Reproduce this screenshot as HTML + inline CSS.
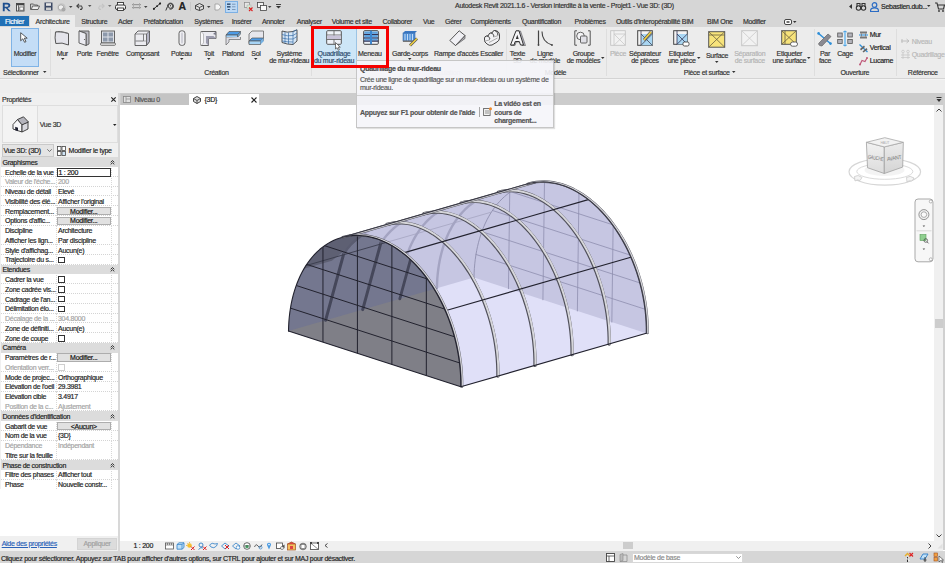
<!DOCTYPE html>
<html><head><meta charset="utf-8">
<style>*{box-sizing:border-box;margin:0;padding:0}
html,body{width:945px;height:563px;overflow:hidden;background:#fff;font-family:"Liberation Sans",sans-serif;font-size:7px;letter-spacing:-0.27px;color:#262626;position:relative}
.a{position:absolute}
.t{position:absolute;white-space:nowrap;line-height:9px;-webkit-text-stroke:0.18px currentColor}
svg{overflow:visible}
</style></head><body>
<div class="a" style="left:0px;top:0px;width:945px;height:15px;background:#d6d6d6;"></div><div class="a" style="left:0px;top:15px;width:945px;height:12px;background:#d6d6d6;"></div><div class="a" style="left:0px;top:27px;width:945px;height:52px;background:#ececec;border-bottom:1px solid #d4d4d4"></div><div class="a" style="left:0px;top:79px;width:945px;height:14px;background:#eeeeee;border-top:1px solid #f4f4f4"></div><div class="a" style="left:0px;top:93px;width:118px;height:458px;background:#f0f0f0;"></div><div class="a" style="left:118px;top:93px;width:2px;height:458px;background:#d8d8d8;"></div><div class="a" style="left:120px;top:93px;width:825px;height:12px;background:#cccccc;"></div><div class="a" style="left:120px;top:105px;width:814px;height:436px;background:#ffffff;"></div><div class="a" style="left:934px;top:105px;width:9px;height:436px;background:#f0f0f0;"></div><div class="a" style="left:943px;top:93px;width:2px;height:457px;background:#d0d0d0;"></div><div class="a" style="left:120px;top:541px;width:823px;height:10px;background:#f0f0f0;"></div><div class="a" style="left:0px;top:551px;width:945px;height:12px;background:#d6d6d6;"></div><svg class="a" style="left:2px;top:2px;" width="9.5" height="9.5" viewBox="0 0 9.5 9.5"><path d="M0.8 9.2V0.8H5Q8.3 0.8 8.3 3.4Q8.3 5.6 5.6 6L8.8 9.2H6.6L3.9 6.2H2.7V9.2Z M2.7 2.4V4.7H4.9Q6.4 4.7 6.4 3.5Q6.4 2.4 4.9 2.4Z" fill="#1e4f8f" fill-rule="evenodd"/></svg><svg class="a" style="left:15.5px;top:2.5px;" width="8.5" height="8.5" viewBox="0 0 8.5 8.5"><rect x="0.5" y="0.5" width="7.5" height="7.5" fill="#f0f0f0" stroke="#444" stroke-width="0.9"/><rect x="0.5" y="0.5" width="7.5" height="1.8" fill="#444"/><path d="M2.5 2.3V8" stroke="#444" stroke-width="0.8"/><rect x="3.8" y="4" width="3.5" height="3.2" fill="#fff" stroke="#555" stroke-width="0.7"/></svg><svg class="a" style="left:30px;top:3px;" width="10" height="7" viewBox="0 0 10 7"><path d="M0.5 1V6.5H8L9.5 3H2.5L1.5 6" fill="#eee" stroke="#555" stroke-width="0.9"/><path d="M0.5 1H3.5L4.5 2H7.5V3" fill="none" stroke="#555" stroke-width="0.9"/></svg><svg class="a" style="left:44px;top:2px;" width="9" height="9" viewBox="0 0 9 9"><rect x="0.5" y="0.5" width="8" height="8" fill="#3d4a66" /><rect x="2" y="1.2" width="5" height="2.6" fill="#e6e6e6"/><rect x="2" y="5.5" width="5" height="2.5" fill="#cfcfcf"/></svg><svg class="a" style="left:57px;top:2.5px;" width="9" height="9" viewBox="0 0 9 9"><circle cx="4.5" cy="4.5" r="4.2" fill="#c4c4c4"/><path d="M1.5 3L4 1.8L6.5 3V5.8L4 7.2L1.5 5.8Z" fill="#f0f0f0" stroke="#999" stroke-width="0.6"/><circle cx="6.5" cy="6.5" r="2" fill="#a8a8a8"/></svg><svg class="a" style="left:68.75px;top:5.5px;" width="3.5" height="2.5" viewBox="0 0 3.5 2.5"><path d="M0 0H3.5L1.75 2Z" fill="#444"/></svg><svg class="a" style="left:76px;top:3px;" width="9" height="7" viewBox="0 0 9 7"><path d="M3 0.8L0.8 3L3 5.2M0.8 3H5.5A2.6 2.6 0 0 1 5.5 6.4H4" fill="none" stroke="#444" stroke-width="1.1"/></svg><svg class="a" style="left:88.25px;top:5px;" width="3.5" height="2.5" viewBox="0 0 3.5 2.5"><path d="M0 0H3.5L1.75 2Z" fill="#555"/></svg><svg class="a" style="left:96px;top:3px;" width="9" height="7" viewBox="0 0 9 7"><path d="M6 0.8L8.2 3L6 5.2M8.2 3H3.5A2.6 2.6 0 0 0 3.5 6.4H5" fill="none" stroke="#c4c4c4" stroke-width="1.1"/></svg><svg class="a" style="left:107.95px;top:5px;" width="3.5" height="2.5" viewBox="0 0 3.5 2.5"><path d="M0 0H3.5L1.75 2Z" fill="#777"/></svg><svg class="a" style="left:114.5px;top:2px;" width="11" height="9" viewBox="0 0 11 9"><rect x="2.5" y="0.5" width="6" height="3" fill="#fff" stroke="#333" stroke-width="0.9"/><rect x="0.5" y="3" width="10" height="4.5" rx="1.5" fill="#f4f4f4" stroke="#333" stroke-width="1"/><rect x="2.5" y="6" width="6" height="2.5" fill="#fff" stroke="#333" stroke-width="0.9"/></svg><svg class="a" style="left:131.5px;top:3px;" width="9" height="6" viewBox="0 0 9 6"><rect x="0" y="1" width="9" height="1.2" fill="#999"/><rect x="0" y="4" width="9" height="1.2" fill="#999"/><rect x="1" y="0" width="0.9" height="6" fill="#aaa"/><rect x="7" y="0" width="0.9" height="6" fill="#aaa"/></svg><svg class="a" style="left:144.25px;top:5.5px;" width="3.5" height="2.5" viewBox="0 0 3.5 2.5"><path d="M0 0H3.5L1.75 2Z" fill="#444"/></svg><svg class="a" style="left:152px;top:2px;" width="10" height="8.5" viewBox="0 0 10 8.5"><path d="M1 7.5L9 0.8" stroke="#333" stroke-width="1"/><circle cx="2" cy="6.8" r="1.1" fill="#222"/><circle cx="8" cy="1.6" r="1.1" fill="#222"/><circle cx="5" cy="4.2" r="0.9" fill="#222"/></svg><svg class="a" style="left:165px;top:2.5px;" width="9" height="8" viewBox="0 0 9 8"><path d="M0.8 7.5L2.5 3.5A3 3 0 1 1 4.5 6" fill="none" stroke="#333" stroke-width="1"/><circle cx="5.5" cy="3" r="2.3" fill="none" stroke="#333" stroke-width="0.9"/><path d="M5.5 2V3.4" stroke="#333" stroke-width="0.8"/></svg><div class="t" style="left:178.5px;top:0px;font-size:10.5px;line-height:13px;font-weight:bold;color:#222;letter-spacing:0">A</div><div class="a" style="left:190px;top:2px;width:1px;height:9px;background:#c8c8c8;"></div><svg class="a" style="left:195px;top:2.5px;" width="9" height="8" viewBox="0 0 9 8"><path d="M4.5 0.5L8.5 2.5V6L4.5 7.5L0.5 6V2.5Z" fill="#ddd" stroke="#333" stroke-width="0.9"/><path d="M0.5 2.5L4.5 4.5L8.5 2.5M4.5 4.5V7.5" fill="none" stroke="#333" stroke-width="0.8"/></svg><svg class="a" style="left:206.75px;top:5.5px;" width="3.5" height="2.5" viewBox="0 0 3.5 2.5"><path d="M0 0H3.5L1.75 2Z" fill="#444"/></svg><svg class="a" style="left:214px;top:2.5px;" width="7.5" height="8" viewBox="0 0 7.5 8"><path d="M1 1H4.5L7 4L4.5 7H1Z" fill="#f6f6f6" stroke="#999" stroke-width="0.8"/></svg><div class="a" style="left:225px;top:0.5px;width:12.5px;height:12px;background:#bcd8f4;border:1px solid #7cb0e4"></div><svg class="a" style="left:227px;top:2.5px;" width="9" height="8" viewBox="0 0 9 8"><rect x="0" y="0.5" width="3.5" height="1.3" fill="#1c3a5e"/><rect x="0" y="3.2" width="3.5" height="1.3" fill="#1c3a5e"/><rect x="0.7" y="6" width="2" height="1" fill="#1c3a5e"/><rect x="5" y="0.8" width="3.5" height="0.7" fill="#5d7da0"/><rect x="5" y="3.5" width="3.5" height="0.7" fill="#5d7da0"/><rect x="5" y="6.2" width="3.5" height="0.7" fill="#5d7da0"/></svg><svg class="a" style="left:244px;top:2px;" width="9" height="9" viewBox="0 0 9 9"><rect x="0.5" y="0.5" width="5" height="5" fill="#e6e6e6" stroke="#888" stroke-width="0.7"/><rect x="3" y="3" width="4" height="4" fill="#d4ead4" stroke="#aaa" stroke-width="0.5"/><path d="M5 5.5L8.5 9M8.5 5.5L5 9" stroke="#d22" stroke-width="1.1"/></svg><svg class="a" style="left:256.5px;top:2px;" width="10" height="9" viewBox="0 0 10 9"><rect x="0.5" y="0.5" width="6" height="5" fill="#f2f2f2" stroke="#444" stroke-width="0.8"/><rect x="3.5" y="3.5" width="6" height="5" fill="#fafafa" stroke="#444" stroke-width="0.8"/></svg><svg class="a" style="left:268.25px;top:5.5px;" width="3.5" height="2.5" viewBox="0 0 3.5 2.5"><path d="M0 0H3.5L1.75 2Z" fill="#444"/></svg><svg class="a" style="left:275.5px;top:4px;" width="5" height="5" viewBox="0 0 5 5"><rect x="0" y="0" width="5" height="0.9" fill="#333"/><path d="M0 2H5L2.5 4.5Z" fill="#333"/></svg><div class="t" style="left:455px;top:1.0px;color:#333;">Autodesk Revit 2021.1.6 - Version interdite à la vente - Projet1 - Vue 3D: (3D)</div><svg class="a" style="left:849px;top:4px;" width="3" height="5" viewBox="0 0 3 5"><path d="M3 0V5L0 2.5Z" fill="#333"/></svg><svg class="a" style="left:855.5px;top:2px;" width="10" height="9" viewBox="0 0 10 9"><circle cx="2.5" cy="6" r="2.2" fill="none" stroke="#333" stroke-width="1.1"/><circle cx="7.5" cy="6" r="2.2" fill="none" stroke="#333" stroke-width="1.1"/><path d="M1 5V1.5H4V5M6 5V1.5H9V5" fill="none" stroke="#333" stroke-width="1.1"/></svg><svg class="a" style="left:870px;top:2px;" width="9" height="10" viewBox="0 0 9 10"><circle cx="4.5" cy="3" r="2.3" fill="none" stroke="#2b6cc4" stroke-width="1.2"/><path d="M0.6 9.5V8.5Q0.6 5.8 4.5 5.8Q8.4 5.8 8.4 8.5V9.5Z" fill="none" stroke="#2b6cc4" stroke-width="1.2"/></svg><div class="t" style="left:881px;top:1.5px;color:#222;">Sebastien.dub...</div><svg class="a" style="left:926.75px;top:5px;" width="3.5" height="2.5" viewBox="0 0 3.5 2.5"><path d="M0 0H3.5L1.75 2Z" fill="#333"/></svg><svg class="a" style="left:934.5px;top:2px;" width="10" height="10" viewBox="0 0 10 10"><path d="M0 1H2L3.5 7H8.5L9.5 3H2.7" fill="none" stroke="#333" stroke-width="1.1"/><circle cx="4" cy="9" r="0.9" fill="#333"/><circle cx="8" cy="9" r="0.9" fill="#333"/></svg><div class="a" style="left:0px;top:16px;width:29px;height:10px;background:#2070b6;"></div><div class="t" style="left:-65.5px;width:160px;text-align:center;top:16.5px;color:#fff;">Fichier</div><div class="a" style="left:30px;top:15px;width:45px;height:12px;background:#ececec;"></div><div class="t" style="left:35.5px;top:16.8px;color:#333;">Architecture</div><div class="t" style="left:81.3px;top:16.8px;color:#333;">Structure</div><div class="t" style="left:118px;top:16.8px;color:#333;">Acier</div><div class="t" style="left:143.5px;top:16.8px;color:#333;">Préfabrication</div><div class="t" style="left:194.3px;top:16.8px;color:#333;">Systèmes</div><div class="t" style="left:231.7px;top:16.8px;color:#333;">Insérer</div><div class="t" style="left:261.9px;top:16.8px;color:#333;">Annoter</div><div class="t" style="left:296.8px;top:16.8px;color:#333;">Analyser</div><div class="t" style="left:331.7px;top:16.8px;color:#333;">Volume et site</div><div class="t" style="left:382.5px;top:16.8px;color:#333;">Collaborer</div><div class="t" style="left:423px;top:16.8px;color:#333;">Vue</div><div class="t" style="left:445px;top:16.8px;color:#333;">Gérer</div><div class="t" style="left:470.5px;top:16.8px;color:#333;">Compléments</div><div class="t" style="left:522px;top:16.8px;color:#333;">Quantification</div><div class="t" style="left:574.6px;top:16.8px;color:#333;">Problèmes</div><div class="t" style="left:615.9px;top:16.8px;color:#333;">Outils d'interopérabilité BIM</div><div class="t" style="left:707px;top:16.8px;color:#333;">BIM One</div><div class="t" style="left:742.9px;top:16.8px;color:#333;">Modifier</div><svg class="a" style="left:784px;top:18.5px;" width="8" height="6" viewBox="0 0 8 6"><rect x="0.5" y="0.5" width="7" height="5" rx="1.5" fill="#fff" stroke="#333" stroke-width="0.9"/><rect x="2.5" y="2.3" width="3" height="1.4" fill="#333"/></svg><svg class="a" style="left:793.25px;top:20.8px;" width="3.5" height="2.5" viewBox="0 0 3.5 2.5"><path d="M0 0H3.5L1.75 2Z" fill="#333"/></svg><div class="a" style="left:49.5px;top:29px;width:1px;height:47px;background:#dedede;"></div><div class="a" style="left:311px;top:29px;width:1px;height:47px;background:#dedede;"></div><div class="a" style="left:505.8px;top:29px;width:1px;height:47px;background:#dedede;"></div><div class="a" style="left:605.5px;top:29px;width:1px;height:47px;background:#dedede;"></div><div class="a" style="left:813.5px;top:29px;width:1px;height:47px;background:#dedede;"></div><div class="a" style="left:895.5px;top:29px;width:1px;height:47px;background:#dedede;"></div><div class="a" style="left:11px;top:28px;width:28px;height:39px;background:#c4ddf6;border:1px solid #7fb3e6"></div><svg class="a" style="left:20px;top:32px;" width="8" height="11" viewBox="0 0 8 11"><path d="M0.7 0.7V8.8L2.8 6.8L4.6 10.3L6 9.6L4.3 6.2H7.2Z" fill="#fff" stroke="#333" stroke-width="0.8"/></svg><div class="t" style="left:-55px;width:160px;text-align:center;top:48.7px;color:#333;">Modifier</div><div class="t" style="left:3px;top:67.5px;color:#333;">Sélectionner</div><svg class="a" style="left:43.25px;top:71px;" width="3.5" height="2.5" viewBox="0 0 3.5 2.5"><path d="M0 0H3.5L1.75 2Z" fill="#333"/></svg><svg class="a" style="left:54px;top:30px;" width="16" height="16" viewBox="0 0 16 16"><path d="M1.5 2Q5 0.5 14.5 3.5V15Q8 12 1.8 13.5Q0.5 8 1.5 2Z" fill="#e4e4ea" stroke="#555" stroke-width="1"/><path d="M14.5 3.5Q8 1.5 1.5 2" fill="none" stroke="#777" stroke-width="0.8"/></svg><div class="t" style="left:-17.700000000000003px;width:160px;text-align:center;top:48.7px;color:#333;">Mur</div><svg class="a" style="left:60.55px;top:58px;" width="3.5" height="2.5" viewBox="0 0 3.5 2.5"><path d="M0 0H3.5L1.75 2Z" fill="#333"/></svg><svg class="a" style="left:78px;top:30px;" width="16" height="16" viewBox="0 0 16 16"><path d="M1 1H11V14L8 15.5V3.5L1 1Z" fill="#bcbcc4" stroke="#555" stroke-width="0.9"/><path d="M1 1L8 3.5V15.5L1 13Z" fill="#ececf2" stroke="#555" stroke-width="0.9"/><circle cx="6.5" cy="9.5" r="0.6" fill="#555"/></svg><div class="t" style="left:4.5px;width:160px;text-align:center;top:48.7px;color:#333;">Porte</div><svg class="a" style="left:100px;top:30px;" width="16" height="16" viewBox="0 0 16 16"><rect x="1.5" y="1" width="13" height="12" fill="#dfe2e8" stroke="#555" stroke-width="0.9"/><rect x="3" y="2.5" width="4.5" height="4" fill="#8d99ab"/><rect x="8.5" y="2.5" width="4.5" height="4" fill="#8d99ab"/><rect x="3" y="7.5" width="4.5" height="4" fill="#8d99ab"/><rect x="8.5" y="7.5" width="4.5" height="4" fill="#8d99ab"/><rect x="0.5" y="13" width="15" height="2.3" rx="1" fill="#e8e8e8" stroke="#555" stroke-width="0.8"/></svg><div class="t" style="left:27.5px;width:160px;text-align:center;top:48.7px;color:#333;">Fenêtre</div><svg class="a" style="left:134px;top:30px;" width="16" height="16" viewBox="0 0 16 16"><path d="M1 4L4 1H15.5V11.5L12.5 15.5H1Z" fill="#ececf0" stroke="#555" stroke-width="0.9"/><path d="M12.5 4L15.5 1V11.5L12.5 15.5Z" fill="#b6b6c6" stroke="#555" stroke-width="0.7"/><path d="M1 4H12.5V15.5" fill="none" stroke="#666" stroke-width="0.7"/><path d="M9.5 4V11H1.5" fill="none" stroke="#666" stroke-width="0.8"/><path d="M9.5 11L12.5 11" stroke="#888" stroke-width="0.6"/></svg><div class="t" style="left:62.599999999999994px;width:160px;text-align:center;top:48.7px;color:#333;">Composant</div><svg class="a" style="left:140.85px;top:58px;" width="3.5" height="2.5" viewBox="0 0 3.5 2.5"><path d="M0 0H3.5L1.75 2Z" fill="#333"/></svg><svg class="a" style="left:177.5px;top:30px;" width="8" height="16" viewBox="0 0 8 16"><rect x="1" y="0.8" width="6" height="14.6" rx="2.5" fill="#efeff2" stroke="#555" stroke-width="0.9"/><rect x="3" y="2.5" width="2" height="11" rx="1" fill="#d0d0d8"/></svg><div class="t" style="left:101.4px;width:160px;text-align:center;top:48.7px;color:#333;">Poteau</div><svg class="a" style="left:179.65px;top:58px;" width="3.5" height="2.5" viewBox="0 0 3.5 2.5"><path d="M0 0H3.5L1.75 2Z" fill="#333"/></svg><svg class="a" style="left:200.3px;top:30px;" width="16" height="16" viewBox="0 0 16 16"><path d="M1 1.5H16V8.5H8.5V15.5H1Z" fill="#eaeaf0" stroke="#555" stroke-width="0.9"/><path d="M8.5 8.5H16L13.5 6H6V13L8.5 15.5Z" fill="#9c9cae"/><path d="M16 1.5V5L13 4Z" fill="#7a7a88"/><path d="M1 15.5L3.5 13V4L1 1.5" fill="#f8f8fa" stroke="#888" stroke-width="0.5"/></svg><div class="t" style="left:129px;width:160px;text-align:center;top:48.7px;color:#333;">Toit</div><svg class="a" style="left:207.25px;top:58px;" width="3.5" height="2.5" viewBox="0 0 3.5 2.5"><path d="M0 0H3.5L1.75 2Z" fill="#333"/></svg><svg class="a" style="left:224.5px;top:30px;" width="16" height="16" viewBox="0 0 16 16"><path d="M1 5L4 1.5H15.5L12.5 5Z" fill="#4d9be6" stroke="#555" stroke-width="0.7"/><path d="M1 5H12.5V7.5H1Z" fill="#9ccdf5" stroke="#555" stroke-width="0.7"/><path d="M12.5 5L15.5 1.5V4L12.5 7.5Z" fill="#6aa9e0" stroke="#555" stroke-width="0.6"/><path d="M1 7.5V15L4 12V9.5H15.5V7" fill="#dcdce4" stroke="#666" stroke-width="0.7"/></svg><div class="t" style="left:153px;width:160px;text-align:center;top:48.7px;color:#333;">Plafond</div><svg class="a" style="left:248px;top:30px;" width="16" height="16" viewBox="0 0 16 16"><path d="M1 4L4 1H15.5V10.5L12.5 13.5H1Z" fill="#e6e6ec" stroke="#666" stroke-width="0.8"/><path d="M1 11L4 8H15.5L12.5 11Z" fill="#4d9be6" stroke="#555" stroke-width="0.7"/><path d="M1 11H12.5V14.5H1Z" fill="#a6d4f6" stroke="#555" stroke-width="0.7"/><path d="M12.5 11L15.5 8V11.5L12.5 14.5Z" fill="#74b1e4"/></svg><div class="t" style="left:176px;width:160px;text-align:center;top:48.7px;color:#333;">Sol</div><svg class="a" style="left:254.25px;top:58px;" width="3.5" height="2.5" viewBox="0 0 3.5 2.5"><path d="M0 0H3.5L1.75 2Z" fill="#333"/></svg><svg class="a" style="left:280.5px;top:29px;" width="17" height="17" viewBox="0 0 17 17"><path d="M1 2Q6 4 12 2.5L16 0.8V12L12 15.5Q6 15.5 1 13.5Z" fill="#d6e6f6" stroke="#444" stroke-width="0.9"/><path d="M12 2.5V15.5M1 5.5Q6 7.5 12 6.5M1 9Q6 10.5 12 10M1 12Q6 13 12 13M4 3V14.5M7.5 3.5V15M12 2.5L16 0.8M12 6.5L16 4M12 10L16 7.5" fill="none" stroke="#3a6ea8" stroke-width="0.7"/></svg><div class="t" style="left:209.2px;width:160px;text-align:center;top:48.7px;color:#333;">Système</div><div class="t" style="left:209.2px;width:160px;text-align:center;top:55.7px;color:#333;">de mur-rideau</div><div class="a" style="left:314px;top:29px;width:43px;height:36px;background:#cde6f7;border-right:1px solid #9cc4e4"></div><svg class="a" style="left:326px;top:30px;" width="16" height="16" viewBox="0 0 16 16"><rect x="0.7" y="0.7" width="14.6" height="13.6" rx="1" fill="#eef2f8" stroke="#555" stroke-width="1"/><path d="M8 0.7V14.3M0.7 5H15.3M0.7 9.5H15.3" stroke="#666" stroke-width="0.9"/><rect x="1.3" y="5.5" width="13.4" height="3.5" fill="#c9c3d9"/></svg><div class="t" style="left:254px;width:160px;text-align:center;top:48.7px;color:#2d4d6e;">Quadrillage</div><div class="t" style="left:254px;width:160px;text-align:center;top:55.7px;color:#2d4d6e;">du mur-rideau</div><svg class="a" style="left:334.5px;top:42px;" width="6" height="9" viewBox="0 0 6 9"><path d="M0.5 0.5V7L2 5.7L3.3 8.3L4.4 7.8L3.2 5.2H5.3Z" fill="#fff" stroke="#444" stroke-width="0.7"/></svg><svg class="a" style="left:362.5px;top:30px;" width="16" height="16" viewBox="0 0 16 16"><rect x="0.7" y="0.7" width="14.6" height="13.6" rx="1" fill="#eef2f8" stroke="#444" stroke-width="1"/><path d="M0.7 4.5H15.3M0.7 8H15.3M0.7 11H15.3" stroke="#335" stroke-width="1.3"/><rect x="1.3" y="1.5" width="13.4" height="2.3" fill="#5da3e0"/><rect x="1.3" y="5" width="13.4" height="2.3" fill="#5da3e0"/><rect x="1.3" y="8.6" width="13.4" height="1.8" fill="#5da3e0"/><rect x="7" y="0.7" width="2" height="13.6" fill="#3c86cf"/></svg><div class="t" style="left:289.8px;width:160px;text-align:center;top:48.7px;color:#333;">Meneau</div><svg class="a" style="left:402px;top:30px;" width="16" height="16" viewBox="0 0 16 16"><path d="M1 3L3 1H15L13 3Z" fill="#3a78c4"/><rect x="1" y="3" width="12" height="8" fill="#4f8fd6" stroke="#3a6aa8" stroke-width="0.6"/><path d="M3 4V10.5M5.5 4V10.5M8 4V10.5M10.5 4V10.5" stroke="#dfefff" stroke-width="0.8"/><rect x="1" y="10.5" width="12" height="1.5" fill="#777"/><path d="M8 15.5L15 8.5" stroke="#555" stroke-width="2.8"/><path d="M8 15.5L15 8.5" stroke="#f0d040" stroke-width="1.6"/></svg><div class="t" style="left:330px;width:160px;text-align:center;top:48.7px;color:#333;">Garde-corps</div><svg class="a" style="left:408.25px;top:58px;" width="3.5" height="2.5" viewBox="0 0 3.5 2.5"><path d="M0 0H3.5L1.75 2Z" fill="#333"/></svg><svg class="a" style="left:449px;top:30px;" width="16" height="16" viewBox="0 0 16 16"><path d="M0.8 10.5L10.2 0.8L16 5.5L6.5 15.5Z" fill="#f0f0f4" stroke="#444" stroke-width="0.9"/><path d="M16 5.5V8.5L6.5 15.5L15 7Z" fill="#b0b0b8" stroke="#555" stroke-width="0.7"/></svg><div class="t" style="left:376.3px;width:160px;text-align:center;top:48.7px;color:#333;">Rampe d'accès</div><svg class="a" style="left:483.5px;top:30px;" width="16" height="16" viewBox="0 0 16 16"><path d="M0.5 8Q0.5 6.5 2.5 6L4.5 5.5Q4.5 3.5 6.5 3L8.5 2.5Q8.5 0.8 10.5 0.5Q15 0.5 15.5 5V8Q15.5 10.5 13 12L8 15Q5 16 3 14L1 12Q0.3 11 0.5 8Z" fill="#f2f2f4" stroke="#333" stroke-width="0.9"/><path d="M2.5 6Q5.5 6 6 9L5 9.5M6.5 3Q9.5 3 10 6L9 6.5M10.5 0.5Q13.5 1 14 4.5L13 5" fill="none" stroke="#333" stroke-width="0.8"/><path d="M1 11L5.5 10M5 12.5L13.5 8M9.5 7L14.5 5.5" fill="none" stroke="#999" stroke-width="0.8"/></svg><div class="t" style="left:411.7px;width:160px;text-align:center;top:48.7px;color:#333;">Escalier</div><svg class="a" style="left:509.6px;top:30px;" width="16" height="16" viewBox="0 0 16 16"><path d="M1 15.5L6.5 1H10.5L15.5 15.5H12L10.8 12H6.2L5 15.5Z" fill="#b4b4c0" stroke="#555" stroke-width="0.6"/><path d="M0.5 15L6 0.8H9L13.5 15H10.5L9.3 11.5H5.2L4 15Z" fill="#f4f4f6" stroke="#333" stroke-width="1"/><path d="M5.8 9H8.7L7.3 4.8Z" fill="#333"/></svg><div class="t" style="left:437.4px;width:160px;text-align:center;top:48.7px;color:#333;">Texte</div><div class="t" style="left:437.4px;width:160px;text-align:center;top:55.7px;color:#333;">3D</div><svg class="a" style="left:537px;top:30px;" width="16" height="16" viewBox="0 0 16 16"><path d="M1.5 0.5V15" stroke="#444" stroke-width="1.2"/><path d="M5 1.5Q5 12 15 15" fill="none" stroke="#444" stroke-width="1.1"/><circle cx="1.5" cy="15" r="0.9" fill="#444"/><circle cx="15" cy="15" r="0.9" fill="#444"/></svg><div class="t" style="left:465px;width:160px;text-align:center;top:48.7px;color:#333;">Ligne</div><div class="t" style="left:465px;width:160px;text-align:center;top:55.7px;color:#333;">de modèle</div><svg class="a" style="left:574px;top:30px;" width="17" height="16" viewBox="0 0 17 16"><path d="M3 0.8H0.8V15.2H3M14 0.8H16.2V15.2H14" fill="none" stroke="#555" stroke-width="1"/><circle cx="6.5" cy="6" r="3.8" fill="#f4f4f6" stroke="#555" stroke-width="0.9"/><rect x="6.5" y="6" width="6.5" height="7" rx="1" fill="#e0e0e6" stroke="#555" stroke-width="0.9"/></svg><div class="t" style="left:503.5px;width:160px;text-align:center;top:48.7px;color:#333;">Groupe</div><div class="t" style="left:503.5px;width:160px;text-align:center;top:55.7px;color:#333;">de modèles</div><svg class="a" style="left:601.25px;top:56.6px;" width="3.5" height="2.5" viewBox="0 0 3.5 2.5"><path d="M0 0H3.5L1.75 2Z" fill="#333"/></svg><svg class="a" style="left:609.5px;top:30px;" width="16" height="16" viewBox="0 0 16 16"><rect x="0.7" y="0.7" width="14.6" height="14.6" fill="#f2f2f2" stroke="#c4c4c4" stroke-width="0.9"/><path d="M4 0.7V15.3M4 4H15.3M4 4L15.3 15.3M15.3 4L4 15.3" stroke="#c8c8c8" stroke-width="0.8"/></svg><div class="t" style="left:538px;width:160px;text-align:center;top:48.7px;color:#b4b4b4;">Pièce</div><svg class="a" style="left:637px;top:30px;" width="16" height="16" viewBox="0 0 16 16"><rect x="0.7" y="0.7" width="14.6" height="14.6" fill="#f4f4f4" stroke="#444" stroke-width="1"/><rect x="4" y="4" width="11.3" height="11.3" fill="#a9d6f2"/><path d="M4 0.7V15.3M4 4L15.3 15.3M15.3 4L4 15.3" stroke="#445" stroke-width="0.8"/><path d="M7 10L14 2" stroke="#555" stroke-width="2.8"/><path d="M7 10L14 2" stroke="#f0d040" stroke-width="1.6"/></svg><div class="t" style="left:565px;width:160px;text-align:center;top:48.7px;color:#333;">Séparateur</div><div class="t" style="left:565px;width:160px;text-align:center;top:55.7px;color:#333;">de pièces</div><svg class="a" style="left:673px;top:30px;" width="16" height="16" viewBox="0 0 16 16"><rect x="0.7" y="0.7" width="13.6" height="13.6" fill="#f4f4f4" stroke="#444" stroke-width="1"/><rect x="4" y="4" width="10.3" height="10.3" fill="#a9d6f2"/><path d="M4 0.7V14.3M4 4L14.3 14.3M14.3 4L4 14.3" stroke="#335" stroke-width="0.8"/><rect x="10" y="12" width="6" height="4" rx="1.5" fill="#fff" stroke="#444" stroke-width="0.9"/></svg><div class="t" style="left:601.6px;width:160px;text-align:center;top:48.7px;color:#333;">Etiqueter</div><div class="t" style="left:601.6px;width:160px;text-align:center;top:55.7px;color:#333;">une pièce</div><svg class="a" style="left:696.65px;top:56.6px;" width="3.5" height="2.5" viewBox="0 0 3.5 2.5"><path d="M0 0H3.5L1.75 2Z" fill="#333"/></svg><svg class="a" style="left:708.3px;top:31px;" width="18" height="17" viewBox="0 0 18 17"><rect x="0.7" y="0.7" width="16" height="15.5" fill="#f7e37a" stroke="#555" stroke-width="1"/><path d="M0.7 0.7L16.7 16.2M16.7 0.7L0.7 16.2M0.7 4H16.7" stroke="#6a6040" stroke-width="0.8"/></svg><div class="t" style="left:637px;width:160px;text-align:center;top:51.2px;color:#333;">Surface</div><svg class="a" style="left:715.25px;top:60.5px;" width="3.5" height="2.5" viewBox="0 0 3.5 2.5"><path d="M0 0H3.5L1.75 2Z" fill="#333"/></svg><svg class="a" style="left:741px;top:30px;" width="16" height="16" viewBox="0 0 16 16"><rect x="0.7" y="0.7" width="15.6" height="15" fill="#f2f2f2" stroke="#c4c4c4" stroke-width="0.9"/><path d="M0.7 0.7L16.3 15.7M16.3 0.7L0.7 15.7" stroke="#cacaca" stroke-width="0.8"/></svg><div class="t" style="left:669.8px;width:160px;text-align:center;top:48.7px;color:#b4b4b4;">Séparation</div><div class="t" style="left:669.8px;width:160px;text-align:center;top:55.7px;color:#b4b4b4;">de surface</div><svg class="a" style="left:781px;top:30px;" width="16" height="16" viewBox="0 0 16 16"><rect x="0.7" y="0.7" width="14.6" height="13.6" fill="#f7e37a" stroke="#555" stroke-width="1"/><path d="M0.7 0.7L15.3 14.3M15.3 0.7L0.7 14.3M4 0.7V14.3" stroke="#6a6040" stroke-width="0.8"/><rect x="9.5" y="12" width="7" height="4.2" rx="2" fill="#fff" stroke="#555" stroke-width="0.9"/></svg><div class="t" style="left:709.4px;width:160px;text-align:center;top:48.7px;color:#333;">Etiqueter</div><div class="t" style="left:709.4px;width:160px;text-align:center;top:55.7px;color:#333;">une surface</div><svg class="a" style="left:806.65px;top:56.6px;" width="3.5" height="2.5" viewBox="0 0 3.5 2.5"><path d="M0 0H3.5L1.75 2Z" fill="#333"/></svg><svg class="a" style="left:817px;top:31px;" width="15" height="15" viewBox="0 0 15 15"><path d="M1 2L14 13" stroke="#2f8fd8" stroke-width="1.6"/><circle cx="1.6" cy="2.4" r="1.3" fill="#2f8fd8"/><circle cx="13.5" cy="12.6" r="1.3" fill="#2f8fd8"/><path d="M2 12L11 3L14 5.5L5 15Q2 15 1.5 13Z" fill="#8a8a92" stroke="#666" stroke-width="0.7"/></svg><div class="t" style="left:745px;width:160px;text-align:center;top:48.7px;color:#333;">Par</div><div class="t" style="left:745px;width:160px;text-align:center;top:55.7px;color:#333;">face</div><svg class="a" style="left:837px;top:31px;" width="16" height="15" viewBox="0 0 16 15"><rect x="0.7" y="2" width="4.5" height="4" fill="#b4b4bc" stroke="#555" stroke-width="0.8"/><rect x="0.7" y="8.5" width="4.5" height="4" fill="#b4b4bc" stroke="#555" stroke-width="0.8"/><rect x="10.8" y="2" width="4.5" height="4" fill="#b4b4bc" stroke="#555" stroke-width="0.8"/><rect x="10.8" y="8.5" width="4.5" height="4" fill="#b4b4bc" stroke="#555" stroke-width="0.8"/><path d="M8 0V15" stroke="#8cc6f0" stroke-width="2"/><path d="M6.2 1L8 0L9.8 1M6.2 14L8 15L9.8 14" fill="none" stroke="#2f8fd8" stroke-width="0.8"/></svg><div class="t" style="left:765px;width:160px;text-align:center;top:48.7px;color:#333;">Cage</div><svg class="a" style="left:858.5px;top:31px;" width="9" height="8" viewBox="0 0 9 8"><rect x="1" y="0.5" width="7" height="2" fill="#777"/><rect x="1" y="5.5" width="7" height="2" fill="#777"/><path d="M0 4H9" stroke="#4aa3e8" stroke-width="1.3"/><path d="M2.5 2.5V5.5M6.5 2.5V5.5" stroke="#777" stroke-width="0.8"/></svg><div class="t" style="left:869.7px;top:30.299999999999997px;color:#222;">Mur</div><svg class="a" style="left:858.5px;top:43.5px;" width="9" height="8.5" viewBox="0 0 9 8.5"><path d="M0.5 0.5L8.5 8" stroke="#2f8fd8" stroke-width="1.3"/><path d="M1 5L5 1.5L6 3L2 6.5Z" fill="#666"/><path d="M3.5 7.5L7.5 4L8.5 5.5L4.5 8.5Z" fill="#666"/></svg><div class="t" style="left:869.7px;top:43.0px;color:#222;">Vertical</div><svg class="a" style="left:858.5px;top:56.5px;" width="9" height="8.5" viewBox="0 0 9 8.5"><path d="M1 7.5L3 3.5L6 4.5L8 1" fill="none" stroke="#c05a7a" stroke-width="1.2"/><circle cx="1" cy="7.5" r="1" fill="#c05a7a"/><circle cx="8" cy="1" r="1" fill="#c05a7a"/></svg><div class="t" style="left:869.7px;top:56.2px;color:#222;">Lucarne</div><svg class="a" style="left:900.5px;top:38px;" width="9" height="6" viewBox="0 0 9 6"><path d="M0 3H8M5.5 1L8 3L5.5 5M1 1V5" fill="none" stroke="#bbb" stroke-width="0.9"/></svg><div class="t" style="left:911.7px;top:36.7px;color:#b8b8b8;">Niveau</div><svg class="a" style="left:900.5px;top:50px;" width="9" height="9" viewBox="0 0 9 9"><circle cx="2" cy="1.5" r="1.3" fill="none" stroke="#c4c4c4" stroke-width="0.7"/><circle cx="7" cy="1.5" r="1.3" fill="none" stroke="#c4c4c4" stroke-width="0.7"/><path d="M2 3V9M7 3V9M0 5H9M0 7.5H9" stroke="#c4c4c4" stroke-width="0.7"/></svg><div class="t" style="left:911.7px;top:49.7px;color:#b8b8b8;">Quadrillage</div><div class="t" style="left:136.5px;width:160px;text-align:center;top:67.5px;color:#333;">Création</div><div class="t" style="left:365px;width:160px;text-align:center;top:68.0px;color:#bdbdc6;">Circulation</div><div class="t" style="left:475.5px;width:160px;text-align:center;top:67.5px;color:#333;">Modèle</div><div class="t" style="left:683.8px;top:67.5px;color:#333;">Pièce et surface</div><svg class="a" style="left:731.95px;top:71.3px;" width="3.5" height="2.5" viewBox="0 0 3.5 2.5"><path d="M0 0H3.5L1.75 2Z" fill="#333"/></svg><div class="t" style="left:774.8px;width:160px;text-align:center;top:67.5px;color:#333;">Ouverture</div><div class="t" style="left:842.8px;width:160px;text-align:center;top:67.5px;color:#333;">Référence</div><div class="t" style="left:2px;top:95.1px;color:#333;">Propriétés</div><svg class="a" style="left:111px;top:97px;" width="5" height="5" viewBox="0 0 5 5"><path d="M0.3 0.3L4.7 4.7M4.7 0.3L0.3 4.7" stroke="#222" stroke-width="1.1"/></svg><div class="a" style="left:1.5px;top:105.3px;width:116px;height:38px;background:#f0f0f0;border:1px solid #dedede"></div><div class="a" style="left:2.5px;top:106.3px;width:35px;height:36px;background:#f3f3f3;border-right:1px solid #dedede"></div><svg class="a" style="left:12px;top:115.5px;" width="17" height="17" viewBox="0 0 17 17"><path d="M1 8.5L5.5 3.5L10 8.5V16L1 13Z" fill="#f6f6f8" stroke="#333" stroke-width="0.9" stroke-linejoin="round"/><path d="M10 8.5L16 6V13L10 16Z" fill="#d8d8de" stroke="#333" stroke-width="0.9" stroke-linejoin="round"/><path d="M5.5 3.5L11.5 0.8L16.5 6L10 8.8Z" fill="#b4b4bc" stroke="#333" stroke-width="0.9" stroke-linejoin="round"/><path d="M3.2 14.2V10.8L6 11.8V15.2Z" fill="#1e2030"/></svg><div class="t" style="left:39.7px;top:120.3px;color:#333;">Vue 3D</div><svg class="a" style="left:112.65px;top:124px;" width="3.5" height="2.5" viewBox="0 0 3.5 2.5"><path d="M0 0H3.5L1.75 2Z" fill="#222"/></svg><div class="a" style="left:1.5px;top:144.4px;width:52px;height:12.2px;background:#e4e4e4;border:1px solid #c9c9c9"></div><div class="t" style="left:3.5px;top:146.1px;color:#222;">Vue 3D: (3D)</div><svg class="a" style="left:46.5px;top:149px;" width="5" height="3" viewBox="0 0 5 3"><path d="M0.3 0.3L2.5 2.5L4.7 0.3" fill="none" stroke="#555" stroke-width="0.8"/></svg><svg class="a" style="left:57px;top:145.5px;" width="9" height="10" viewBox="0 0 9 10"><rect x="0.5" y="0.5" width="3.5" height="4" fill="#fff" stroke="#444" stroke-width="0.8"/><rect x="5" y="0.5" width="3.5" height="4" fill="#fff" stroke="#444" stroke-width="0.8"/><rect x="0.5" y="5.5" width="3.5" height="4" fill="#fff" stroke="#444" stroke-width="0.8"/><rect x="5" y="5.5" width="3.5" height="4" fill="#cfe4f6" stroke="#444" stroke-width="0.8"/></svg><div class="t" style="left:68.6px;top:145.8px;color:#222;">Modifier le type</div><div class="a" style="left:1px;top:157.2px;width:117px;height:9.77px;background:#dcdcdc;"></div><div class="t" style="left:2.5px;top:157.78499999999997px;color:#222;">Graphismes</div><svg class="a" style="left:110px;top:159.78499999999997px;" width="5" height="5" viewBox="0 0 5 5"><path d="M0.7 2.3L2.5 0.6L4.3 2.3M0.7 4.4L2.5 2.7L4.3 4.4" fill="none" stroke="#222" stroke-width="0.9"/></svg><div class="a" style="left:1px;top:166.97px;width:117px;height:9.77px;background:#ffffff;"></div><div class="a" style="left:1px;top:175.94px;width:117px;height:1px;background:repeating-linear-gradient(90deg,#d4d4d4 0 1px,transparent 1px 2px);"></div><div class="a" style="left:55.8px;top:166.97px;width:1px;height:9.77px;background:repeating-linear-gradient(0deg,#d8d8d8 0 1px,transparent 1px 2px);"></div><div class="a" style="left:110.6px;top:166.97px;width:1px;height:9.77px;background:repeating-linear-gradient(0deg,#d8d8d8 0 1px,transparent 1px 2px);"></div><div class="t" style="left:5px;top:167.55499999999998px;color:#1e1e1e;">Echelle de la vue</div><div class="a" style="left:56.5px;top:167.57px;width:54px;height:8.969999999999999px;background:#fff;border:1px solid #333"></div><div class="t" style="left:58.5px;top:167.55499999999998px;color:#111;">1 : 200</div><div class="a" style="left:1px;top:176.73999999999998px;width:117px;height:9.77px;background:#ffffff;"></div><div class="a" style="left:1px;top:185.70999999999998px;width:117px;height:1px;background:repeating-linear-gradient(90deg,#d4d4d4 0 1px,transparent 1px 2px);"></div><div class="a" style="left:55.8px;top:176.73999999999998px;width:1px;height:9.77px;background:repeating-linear-gradient(0deg,#d8d8d8 0 1px,transparent 1px 2px);"></div><div class="a" style="left:110.6px;top:176.73999999999998px;width:1px;height:9.77px;background:repeating-linear-gradient(0deg,#d8d8d8 0 1px,transparent 1px 2px);"></div><div class="t" style="left:5px;top:177.32499999999996px;color:#a4a4a4;">Valeur de l'éche...</div><div class="t" style="left:58px;top:177.32499999999996px;color:#a4a4a4;">200</div><div class="a" style="left:1px;top:186.51px;width:117px;height:9.77px;background:#ffffff;"></div><div class="a" style="left:1px;top:195.48px;width:117px;height:1px;background:repeating-linear-gradient(90deg,#d4d4d4 0 1px,transparent 1px 2px);"></div><div class="a" style="left:55.8px;top:186.51px;width:1px;height:9.77px;background:repeating-linear-gradient(0deg,#d8d8d8 0 1px,transparent 1px 2px);"></div><div class="a" style="left:110.6px;top:186.51px;width:1px;height:9.77px;background:repeating-linear-gradient(0deg,#d8d8d8 0 1px,transparent 1px 2px);"></div><div class="t" style="left:5px;top:187.09499999999997px;color:#1e1e1e;">Niveau de détail</div><div class="t" style="left:58px;top:187.09499999999997px;color:#1e1e1e;">Elevé</div><div class="a" style="left:1px;top:196.27999999999997px;width:117px;height:9.77px;background:#ffffff;"></div><div class="a" style="left:1px;top:205.24999999999997px;width:117px;height:1px;background:repeating-linear-gradient(90deg,#d4d4d4 0 1px,transparent 1px 2px);"></div><div class="a" style="left:55.8px;top:196.27999999999997px;width:1px;height:9.77px;background:repeating-linear-gradient(0deg,#d8d8d8 0 1px,transparent 1px 2px);"></div><div class="a" style="left:110.6px;top:196.27999999999997px;width:1px;height:9.77px;background:repeating-linear-gradient(0deg,#d8d8d8 0 1px,transparent 1px 2px);"></div><div class="t" style="left:5px;top:196.86499999999995px;color:#1e1e1e;">Visibilité des élé...</div><div class="t" style="left:58px;top:196.86499999999995px;color:#1e1e1e;">Afficher l'original</div><div class="a" style="left:1px;top:206.04999999999998px;width:117px;height:9.77px;background:#ffffff;"></div><div class="a" style="left:1px;top:215.01999999999998px;width:117px;height:1px;background:repeating-linear-gradient(90deg,#d4d4d4 0 1px,transparent 1px 2px);"></div><div class="a" style="left:55.8px;top:206.04999999999998px;width:1px;height:9.77px;background:repeating-linear-gradient(0deg,#d8d8d8 0 1px,transparent 1px 2px);"></div><div class="a" style="left:110.6px;top:206.04999999999998px;width:1px;height:9.77px;background:repeating-linear-gradient(0deg,#d8d8d8 0 1px,transparent 1px 2px);"></div><div class="t" style="left:5px;top:206.63499999999996px;color:#1e1e1e;">Remplacement...</div><div class="a" style="left:57px;top:206.85px;width:53.5px;height:8.17px;background:#e1e1e1;border:1px solid #adadad"></div><div class="t" style="left:3.799999999999997px;width:160px;text-align:center;top:206.63499999999996px;color:#111;">Modifier...</div><div class="a" style="left:1px;top:215.82px;width:117px;height:9.77px;background:#ffffff;"></div><div class="a" style="left:1px;top:224.79px;width:117px;height:1px;background:repeating-linear-gradient(90deg,#d4d4d4 0 1px,transparent 1px 2px);"></div><div class="a" style="left:55.8px;top:215.82px;width:1px;height:9.77px;background:repeating-linear-gradient(0deg,#d8d8d8 0 1px,transparent 1px 2px);"></div><div class="a" style="left:110.6px;top:215.82px;width:1px;height:9.77px;background:repeating-linear-gradient(0deg,#d8d8d8 0 1px,transparent 1px 2px);"></div><div class="t" style="left:5px;top:216.40499999999997px;color:#1e1e1e;">Options d'affic...</div><div class="a" style="left:57px;top:216.62px;width:53.5px;height:8.17px;background:#e1e1e1;border:1px solid #adadad"></div><div class="t" style="left:3.799999999999997px;width:160px;text-align:center;top:216.40499999999997px;color:#111;">Modifier...</div><div class="a" style="left:1px;top:225.58999999999997px;width:117px;height:9.77px;background:#ffffff;"></div><div class="a" style="left:1px;top:234.55999999999997px;width:117px;height:1px;background:repeating-linear-gradient(90deg,#d4d4d4 0 1px,transparent 1px 2px);"></div><div class="a" style="left:55.8px;top:225.58999999999997px;width:1px;height:9.77px;background:repeating-linear-gradient(0deg,#d8d8d8 0 1px,transparent 1px 2px);"></div><div class="a" style="left:110.6px;top:225.58999999999997px;width:1px;height:9.77px;background:repeating-linear-gradient(0deg,#d8d8d8 0 1px,transparent 1px 2px);"></div><div class="t" style="left:5px;top:226.17499999999995px;color:#1e1e1e;">Discipline</div><div class="t" style="left:58px;top:226.17499999999995px;color:#1e1e1e;">Architecture</div><div class="a" style="left:1px;top:235.35999999999999px;width:117px;height:9.77px;background:#ffffff;"></div><div class="a" style="left:1px;top:244.32999999999998px;width:117px;height:1px;background:repeating-linear-gradient(90deg,#d4d4d4 0 1px,transparent 1px 2px);"></div><div class="a" style="left:55.8px;top:235.35999999999999px;width:1px;height:9.77px;background:repeating-linear-gradient(0deg,#d8d8d8 0 1px,transparent 1px 2px);"></div><div class="a" style="left:110.6px;top:235.35999999999999px;width:1px;height:9.77px;background:repeating-linear-gradient(0deg,#d8d8d8 0 1px,transparent 1px 2px);"></div><div class="t" style="left:5px;top:235.94499999999996px;color:#1e1e1e;">Afficher les lign...</div><div class="t" style="left:58px;top:235.94499999999996px;color:#1e1e1e;">Par discipline</div><div class="a" style="left:1px;top:245.13px;width:117px;height:9.77px;background:#ffffff;"></div><div class="a" style="left:1px;top:254.1px;width:117px;height:1px;background:repeating-linear-gradient(90deg,#d4d4d4 0 1px,transparent 1px 2px);"></div><div class="a" style="left:55.8px;top:245.13px;width:1px;height:9.77px;background:repeating-linear-gradient(0deg,#d8d8d8 0 1px,transparent 1px 2px);"></div><div class="a" style="left:110.6px;top:245.13px;width:1px;height:9.77px;background:repeating-linear-gradient(0deg,#d8d8d8 0 1px,transparent 1px 2px);"></div><div class="t" style="left:5px;top:245.71499999999997px;color:#1e1e1e;">Style d'affichag...</div><div class="t" style="left:58px;top:245.71499999999997px;color:#1e1e1e;">Aucun(e)</div><div class="a" style="left:1px;top:254.89999999999998px;width:117px;height:9.77px;background:#ffffff;"></div><div class="a" style="left:1px;top:263.86999999999995px;width:117px;height:1px;background:repeating-linear-gradient(90deg,#d4d4d4 0 1px,transparent 1px 2px);"></div><div class="a" style="left:55.8px;top:254.89999999999998px;width:1px;height:9.77px;background:repeating-linear-gradient(0deg,#d8d8d8 0 1px,transparent 1px 2px);"></div><div class="a" style="left:110.6px;top:254.89999999999998px;width:1px;height:9.77px;background:repeating-linear-gradient(0deg,#d8d8d8 0 1px,transparent 1px 2px);"></div><div class="t" style="left:5px;top:255.48499999999996px;color:#1e1e1e;">Trajectoire du s...</div><div class="a" style="left:57.5px;top:256.9px;width:7px;height:6.5px;background:#fff;border:1px solid #333"></div><div class="a" style="left:1px;top:264.66999999999996px;width:117px;height:9.77px;background:#dcdcdc;"></div><div class="t" style="left:2.5px;top:265.25499999999994px;color:#222;">Etendues</div><svg class="a" style="left:110px;top:267.25499999999994px;" width="5" height="5" viewBox="0 0 5 5"><path d="M0.7 2.3L2.5 0.6L4.3 2.3M0.7 4.4L2.5 2.7L4.3 4.4" fill="none" stroke="#222" stroke-width="0.9"/></svg><div class="a" style="left:1px;top:274.44px;width:117px;height:9.77px;background:#ffffff;"></div><div class="a" style="left:1px;top:283.40999999999997px;width:117px;height:1px;background:repeating-linear-gradient(90deg,#d4d4d4 0 1px,transparent 1px 2px);"></div><div class="a" style="left:55.8px;top:274.44px;width:1px;height:9.77px;background:repeating-linear-gradient(0deg,#d8d8d8 0 1px,transparent 1px 2px);"></div><div class="a" style="left:110.6px;top:274.44px;width:1px;height:9.77px;background:repeating-linear-gradient(0deg,#d8d8d8 0 1px,transparent 1px 2px);"></div><div class="t" style="left:5px;top:275.025px;color:#1e1e1e;">Cadrer la vue</div><div class="a" style="left:57.5px;top:276.44px;width:7px;height:6.5px;background:#fff;border:1px solid #333"></div><div class="a" style="left:1px;top:284.21px;width:117px;height:9.77px;background:#ffffff;"></div><div class="a" style="left:1px;top:293.17999999999995px;width:117px;height:1px;background:repeating-linear-gradient(90deg,#d4d4d4 0 1px,transparent 1px 2px);"></div><div class="a" style="left:55.8px;top:284.21px;width:1px;height:9.77px;background:repeating-linear-gradient(0deg,#d8d8d8 0 1px,transparent 1px 2px);"></div><div class="a" style="left:110.6px;top:284.21px;width:1px;height:9.77px;background:repeating-linear-gradient(0deg,#d8d8d8 0 1px,transparent 1px 2px);"></div><div class="t" style="left:5px;top:284.79499999999996px;color:#1e1e1e;">Zone cadrée vis...</div><div class="a" style="left:57.5px;top:286.21px;width:7px;height:6.5px;background:#fff;border:1px solid #333"></div><div class="a" style="left:1px;top:293.98px;width:117px;height:9.77px;background:#ffffff;"></div><div class="a" style="left:1px;top:302.95px;width:117px;height:1px;background:repeating-linear-gradient(90deg,#d4d4d4 0 1px,transparent 1px 2px);"></div><div class="a" style="left:55.8px;top:293.98px;width:1px;height:9.77px;background:repeating-linear-gradient(0deg,#d8d8d8 0 1px,transparent 1px 2px);"></div><div class="a" style="left:110.6px;top:293.98px;width:1px;height:9.77px;background:repeating-linear-gradient(0deg,#d8d8d8 0 1px,transparent 1px 2px);"></div><div class="t" style="left:5px;top:294.565px;color:#1e1e1e;">Cadrage de l'an...</div><div class="a" style="left:57.5px;top:295.98px;width:7px;height:6.5px;background:#fff;border:1px solid #333"></div><div class="a" style="left:1px;top:303.75px;width:117px;height:9.77px;background:#ffffff;"></div><div class="a" style="left:1px;top:312.71999999999997px;width:117px;height:1px;background:repeating-linear-gradient(90deg,#d4d4d4 0 1px,transparent 1px 2px);"></div><div class="a" style="left:55.8px;top:303.75px;width:1px;height:9.77px;background:repeating-linear-gradient(0deg,#d8d8d8 0 1px,transparent 1px 2px);"></div><div class="a" style="left:110.6px;top:303.75px;width:1px;height:9.77px;background:repeating-linear-gradient(0deg,#d8d8d8 0 1px,transparent 1px 2px);"></div><div class="t" style="left:5px;top:304.335px;color:#1e1e1e;">Délimitation élo...</div><div class="a" style="left:57.5px;top:305.75px;width:7px;height:6.5px;background:#fff;border:1px solid #333"></div><div class="a" style="left:1px;top:313.52px;width:117px;height:9.77px;background:#ffffff;"></div><div class="a" style="left:1px;top:322.48999999999995px;width:117px;height:1px;background:repeating-linear-gradient(90deg,#d4d4d4 0 1px,transparent 1px 2px);"></div><div class="a" style="left:55.8px;top:313.52px;width:1px;height:9.77px;background:repeating-linear-gradient(0deg,#d8d8d8 0 1px,transparent 1px 2px);"></div><div class="a" style="left:110.6px;top:313.52px;width:1px;height:9.77px;background:repeating-linear-gradient(0deg,#d8d8d8 0 1px,transparent 1px 2px);"></div><div class="t" style="left:5px;top:314.10499999999996px;color:#a4a4a4;">Décalage de la ...</div><div class="t" style="left:58px;top:314.10499999999996px;color:#a4a4a4;">304.8000</div><div class="a" style="left:1px;top:323.28999999999996px;width:117px;height:9.77px;background:#ffffff;"></div><div class="a" style="left:1px;top:332.25999999999993px;width:117px;height:1px;background:repeating-linear-gradient(90deg,#d4d4d4 0 1px,transparent 1px 2px);"></div><div class="a" style="left:55.8px;top:323.28999999999996px;width:1px;height:9.77px;background:repeating-linear-gradient(0deg,#d8d8d8 0 1px,transparent 1px 2px);"></div><div class="a" style="left:110.6px;top:323.28999999999996px;width:1px;height:9.77px;background:repeating-linear-gradient(0deg,#d8d8d8 0 1px,transparent 1px 2px);"></div><div class="t" style="left:5px;top:323.87499999999994px;color:#1e1e1e;">Zone de définiti...</div><div class="t" style="left:58px;top:323.87499999999994px;color:#1e1e1e;">Aucun(e)</div><div class="a" style="left:1px;top:333.05999999999995px;width:117px;height:9.77px;background:#ffffff;"></div><div class="a" style="left:1px;top:342.0299999999999px;width:117px;height:1px;background:repeating-linear-gradient(90deg,#d4d4d4 0 1px,transparent 1px 2px);"></div><div class="a" style="left:55.8px;top:333.05999999999995px;width:1px;height:9.77px;background:repeating-linear-gradient(0deg,#d8d8d8 0 1px,transparent 1px 2px);"></div><div class="a" style="left:110.6px;top:333.05999999999995px;width:1px;height:9.77px;background:repeating-linear-gradient(0deg,#d8d8d8 0 1px,transparent 1px 2px);"></div><div class="t" style="left:5px;top:333.6449999999999px;color:#1e1e1e;">Zone de coupe</div><div class="a" style="left:57.5px;top:335.05999999999995px;width:7px;height:6.5px;background:#fff;border:1px solid #333"></div><div class="a" style="left:1px;top:342.83px;width:117px;height:9.77px;background:#dcdcdc;"></div><div class="t" style="left:2.5px;top:343.41499999999996px;color:#222;">Caméra</div><svg class="a" style="left:110px;top:345.41499999999996px;" width="5" height="5" viewBox="0 0 5 5"><path d="M0.7 2.3L2.5 0.6L4.3 2.3M0.7 4.4L2.5 2.7L4.3 4.4" fill="none" stroke="#222" stroke-width="0.9"/></svg><div class="a" style="left:1px;top:352.59999999999997px;width:117px;height:9.77px;background:#ffffff;"></div><div class="a" style="left:1px;top:361.56999999999994px;width:117px;height:1px;background:repeating-linear-gradient(90deg,#d4d4d4 0 1px,transparent 1px 2px);"></div><div class="a" style="left:55.8px;top:352.59999999999997px;width:1px;height:9.77px;background:repeating-linear-gradient(0deg,#d8d8d8 0 1px,transparent 1px 2px);"></div><div class="a" style="left:110.6px;top:352.59999999999997px;width:1px;height:9.77px;background:repeating-linear-gradient(0deg,#d8d8d8 0 1px,transparent 1px 2px);"></div><div class="t" style="left:5px;top:353.18499999999995px;color:#1e1e1e;">Paramètres de r...</div><div class="a" style="left:57px;top:353.4px;width:53.5px;height:8.17px;background:#e1e1e1;border:1px solid #adadad"></div><div class="t" style="left:3.799999999999997px;width:160px;text-align:center;top:353.18499999999995px;color:#111;">Modifier...</div><div class="a" style="left:1px;top:362.37px;width:117px;height:9.77px;background:#ffffff;"></div><div class="a" style="left:1px;top:371.34px;width:117px;height:1px;background:repeating-linear-gradient(90deg,#d4d4d4 0 1px,transparent 1px 2px);"></div><div class="a" style="left:55.8px;top:362.37px;width:1px;height:9.77px;background:repeating-linear-gradient(0deg,#d8d8d8 0 1px,transparent 1px 2px);"></div><div class="a" style="left:110.6px;top:362.37px;width:1px;height:9.77px;background:repeating-linear-gradient(0deg,#d8d8d8 0 1px,transparent 1px 2px);"></div><div class="t" style="left:5px;top:362.955px;color:#a4a4a4;">Orientation verr...</div><div class="a" style="left:57.5px;top:364.37px;width:7px;height:6.5px;background:#fff;border:1px solid #cfcfcf"></div><div class="a" style="left:1px;top:372.14px;width:117px;height:9.77px;background:#ffffff;"></div><div class="a" style="left:1px;top:381.10999999999996px;width:117px;height:1px;background:repeating-linear-gradient(90deg,#d4d4d4 0 1px,transparent 1px 2px);"></div><div class="a" style="left:55.8px;top:372.14px;width:1px;height:9.77px;background:repeating-linear-gradient(0deg,#d8d8d8 0 1px,transparent 1px 2px);"></div><div class="a" style="left:110.6px;top:372.14px;width:1px;height:9.77px;background:repeating-linear-gradient(0deg,#d8d8d8 0 1px,transparent 1px 2px);"></div><div class="t" style="left:5px;top:372.72499999999997px;color:#1e1e1e;">Mode de projec...</div><div class="t" style="left:58px;top:372.72499999999997px;color:#1e1e1e;">Orthographique</div><div class="a" style="left:1px;top:381.90999999999997px;width:117px;height:9.77px;background:#ffffff;"></div><div class="a" style="left:1px;top:390.87999999999994px;width:117px;height:1px;background:repeating-linear-gradient(90deg,#d4d4d4 0 1px,transparent 1px 2px);"></div><div class="a" style="left:55.8px;top:381.90999999999997px;width:1px;height:9.77px;background:repeating-linear-gradient(0deg,#d8d8d8 0 1px,transparent 1px 2px);"></div><div class="a" style="left:110.6px;top:381.90999999999997px;width:1px;height:9.77px;background:repeating-linear-gradient(0deg,#d8d8d8 0 1px,transparent 1px 2px);"></div><div class="t" style="left:5px;top:382.49499999999995px;color:#1e1e1e;">Elévation de l'oeil</div><div class="t" style="left:58px;top:382.49499999999995px;color:#1e1e1e;">29.3981</div><div class="a" style="left:1px;top:391.67999999999995px;width:117px;height:9.77px;background:#ffffff;"></div><div class="a" style="left:1px;top:400.6499999999999px;width:117px;height:1px;background:repeating-linear-gradient(90deg,#d4d4d4 0 1px,transparent 1px 2px);"></div><div class="a" style="left:55.8px;top:391.67999999999995px;width:1px;height:9.77px;background:repeating-linear-gradient(0deg,#d8d8d8 0 1px,transparent 1px 2px);"></div><div class="a" style="left:110.6px;top:391.67999999999995px;width:1px;height:9.77px;background:repeating-linear-gradient(0deg,#d8d8d8 0 1px,transparent 1px 2px);"></div><div class="t" style="left:5px;top:392.26499999999993px;color:#1e1e1e;">Elévation cible</div><div class="t" style="left:58px;top:392.26499999999993px;color:#1e1e1e;">3.4917</div><div class="a" style="left:1px;top:401.45px;width:117px;height:9.77px;background:#ffffff;"></div><div class="a" style="left:1px;top:410.41999999999996px;width:117px;height:1px;background:repeating-linear-gradient(90deg,#d4d4d4 0 1px,transparent 1px 2px);"></div><div class="a" style="left:55.8px;top:401.45px;width:1px;height:9.77px;background:repeating-linear-gradient(0deg,#d8d8d8 0 1px,transparent 1px 2px);"></div><div class="a" style="left:110.6px;top:401.45px;width:1px;height:9.77px;background:repeating-linear-gradient(0deg,#d8d8d8 0 1px,transparent 1px 2px);"></div><div class="t" style="left:5px;top:402.03499999999997px;color:#a4a4a4;">Position de la c...</div><div class="t" style="left:58px;top:402.03499999999997px;color:#a4a4a4;">Ajustement</div><div class="a" style="left:1px;top:411.21999999999997px;width:117px;height:9.77px;background:#dcdcdc;"></div><div class="t" style="left:2.5px;top:411.80499999999995px;color:#222;">Données d'identification</div><svg class="a" style="left:110px;top:413.80499999999995px;" width="5" height="5" viewBox="0 0 5 5"><path d="M0.7 2.3L2.5 0.6L4.3 2.3M0.7 4.4L2.5 2.7L4.3 4.4" fill="none" stroke="#222" stroke-width="0.9"/></svg><div class="a" style="left:1px;top:420.98999999999995px;width:117px;height:9.77px;background:#ffffff;"></div><div class="a" style="left:1px;top:429.9599999999999px;width:117px;height:1px;background:repeating-linear-gradient(90deg,#d4d4d4 0 1px,transparent 1px 2px);"></div><div class="a" style="left:55.8px;top:420.98999999999995px;width:1px;height:9.77px;background:repeating-linear-gradient(0deg,#d8d8d8 0 1px,transparent 1px 2px);"></div><div class="a" style="left:110.6px;top:420.98999999999995px;width:1px;height:9.77px;background:repeating-linear-gradient(0deg,#d8d8d8 0 1px,transparent 1px 2px);"></div><div class="t" style="left:5px;top:421.57499999999993px;color:#1e1e1e;">Gabarit de vue</div><div class="a" style="left:57px;top:421.78999999999996px;width:53.5px;height:8.17px;background:#e1e1e1;border:1px solid #adadad"></div><div class="t" style="left:3.799999999999997px;width:160px;text-align:center;top:421.57499999999993px;color:#111;">&lt;Aucun&gt;</div><div class="a" style="left:1px;top:430.76px;width:117px;height:9.77px;background:#ffffff;"></div><div class="a" style="left:1px;top:439.72999999999996px;width:117px;height:1px;background:repeating-linear-gradient(90deg,#d4d4d4 0 1px,transparent 1px 2px);"></div><div class="a" style="left:55.8px;top:430.76px;width:1px;height:9.77px;background:repeating-linear-gradient(0deg,#d8d8d8 0 1px,transparent 1px 2px);"></div><div class="a" style="left:110.6px;top:430.76px;width:1px;height:9.77px;background:repeating-linear-gradient(0deg,#d8d8d8 0 1px,transparent 1px 2px);"></div><div class="t" style="left:5px;top:431.34499999999997px;color:#1e1e1e;">Nom de la vue</div><div class="t" style="left:58px;top:431.34499999999997px;color:#1e1e1e;">{3D}</div><div class="a" style="left:1px;top:440.53px;width:117px;height:9.77px;background:#ffffff;"></div><div class="a" style="left:1px;top:449.49999999999994px;width:117px;height:1px;background:repeating-linear-gradient(90deg,#d4d4d4 0 1px,transparent 1px 2px);"></div><div class="a" style="left:55.8px;top:440.53px;width:1px;height:9.77px;background:repeating-linear-gradient(0deg,#d8d8d8 0 1px,transparent 1px 2px);"></div><div class="a" style="left:110.6px;top:440.53px;width:1px;height:9.77px;background:repeating-linear-gradient(0deg,#d8d8d8 0 1px,transparent 1px 2px);"></div><div class="t" style="left:5px;top:441.11499999999995px;color:#a4a4a4;">Dépendance</div><div class="t" style="left:58px;top:441.11499999999995px;color:#a4a4a4;">Indépendant</div><div class="a" style="left:1px;top:450.29999999999995px;width:117px;height:9.77px;background:#ffffff;"></div><div class="a" style="left:1px;top:459.2699999999999px;width:117px;height:1px;background:repeating-linear-gradient(90deg,#d4d4d4 0 1px,transparent 1px 2px);"></div><div class="a" style="left:55.8px;top:450.29999999999995px;width:1px;height:9.77px;background:repeating-linear-gradient(0deg,#d8d8d8 0 1px,transparent 1px 2px);"></div><div class="a" style="left:110.6px;top:450.29999999999995px;width:1px;height:9.77px;background:repeating-linear-gradient(0deg,#d8d8d8 0 1px,transparent 1px 2px);"></div><div class="t" style="left:5px;top:450.88499999999993px;color:#1e1e1e;">Titre sur la feuille</div><div class="t" style="left:58px;top:450.88499999999993px;color:#1e1e1e;"></div><div class="a" style="left:1px;top:460.07px;width:117px;height:9.77px;background:#dcdcdc;"></div><div class="t" style="left:2.5px;top:460.655px;color:#222;">Phase de construction</div><svg class="a" style="left:110px;top:462.655px;" width="5" height="5" viewBox="0 0 5 5"><path d="M0.7 2.3L2.5 0.6L4.3 2.3M0.7 4.4L2.5 2.7L4.3 4.4" fill="none" stroke="#222" stroke-width="0.9"/></svg><div class="a" style="left:1px;top:469.84px;width:117px;height:9.77px;background:#ffffff;"></div><div class="a" style="left:1px;top:478.80999999999995px;width:117px;height:1px;background:repeating-linear-gradient(90deg,#d4d4d4 0 1px,transparent 1px 2px);"></div><div class="a" style="left:55.8px;top:469.84px;width:1px;height:9.77px;background:repeating-linear-gradient(0deg,#d8d8d8 0 1px,transparent 1px 2px);"></div><div class="a" style="left:110.6px;top:469.84px;width:1px;height:9.77px;background:repeating-linear-gradient(0deg,#d8d8d8 0 1px,transparent 1px 2px);"></div><div class="t" style="left:5px;top:470.42499999999995px;color:#1e1e1e;">Filtre des phases</div><div class="t" style="left:58px;top:470.42499999999995px;color:#1e1e1e;">Afficher tout</div><div class="a" style="left:1px;top:479.60999999999996px;width:117px;height:9.77px;background:#ffffff;"></div><div class="a" style="left:1px;top:488.5799999999999px;width:117px;height:1px;background:repeating-linear-gradient(90deg,#d4d4d4 0 1px,transparent 1px 2px);"></div><div class="a" style="left:55.8px;top:479.60999999999996px;width:1px;height:9.77px;background:repeating-linear-gradient(0deg,#d8d8d8 0 1px,transparent 1px 2px);"></div><div class="a" style="left:110.6px;top:479.60999999999996px;width:1px;height:9.77px;background:repeating-linear-gradient(0deg,#d8d8d8 0 1px,transparent 1px 2px);"></div><div class="t" style="left:5px;top:480.19499999999994px;color:#1e1e1e;">Phase</div><div class="t" style="left:58px;top:480.19499999999994px;color:#1e1e1e;">Nouvelle constr...</div><div class="a" style="left:0px;top:489.4px;width:118px;height:47px;background:#ffffff;"></div><div class="t" style="left:1.7px;top:538.9px;color:#2a62b8;"><u>Aide des propriétés</u></div><div class="a" style="left:77px;top:538px;width:40px;height:11.5px;background:#dcdcdc;border:1px solid #d4d4d4"></div><div class="t" style="left:17px;width:160px;text-align:center;top:539.1px;color:#a0a0a0;">Appliquer</div><div class="a" style="left:121px;top:93.5px;width:68px;height:11.5px;background:#c4c4c4;"></div><svg class="a" style="left:123px;top:96px;" width="8" height="7" viewBox="0 0 8 7"><rect x="0.5" y="0.5" width="7" height="6" fill="#e0e0e0" stroke="#888" stroke-width="0.8"/><path d="M3 0.5V6.5M3 3H7.5" stroke="#888" stroke-width="0.7"/></svg><div class="t" style="left:134.5px;top:95.0px;color:#555;">Niveau 0</div><div class="a" style="left:189px;top:93.5px;width:70px;height:11.5px;background:#ffffff;"></div><svg class="a" style="left:192.5px;top:95.5px;" width="8" height="8" viewBox="0 0 8 8"><path d="M4 0.5L7.5 2.5V5.5L4 7.5L0.5 5.5V2.5Z" fill="#ddd" stroke="#333" stroke-width="0.9"/><path d="M0.5 2.5L4 4.5L7.5 2.5M4 4.5V7.5" fill="none" stroke="#333" stroke-width="0.8"/></svg><div class="t" style="left:204.5px;top:95.0px;color:#222;">{3D}</div><svg class="a" style="left:250.5px;top:97px;" width="6" height="6" viewBox="0 0 6 6"><path d="M0.5 0.5L5.5 5.5M5.5 0.5L0.5 5.5" stroke="#222" stroke-width="1.1"/></svg><svg class="a" style="left:935.5px;top:96.5px;" width="6" height="6" viewBox="0 0 6 6"><rect x="0.5" y="0" width="5" height="1" fill="#333"/><path d="M0.5 2H5.5L3 5Z" fill="#333"/></svg><svg class="a" style="left:935.5px;top:108px;" width="6" height="4" viewBox="0 0 6 4"><path d="M0.5 3.5L3 1L5.5 3.5" fill="none" stroke="#444" stroke-width="1"/></svg><svg class="a" style="left:935.5px;top:533.5px;" width="6" height="4" viewBox="0 0 6 4"><path d="M0.5 0.5L3 3L5.5 0.5" fill="none" stroke="#444" stroke-width="1"/></svg><div class="a" style="left:934.5px;top:319px;width:8px;height:9px;background:#cdcdcd;"></div><div class="a" style="left:623px;top:541.8px;width:9.5px;height:7.6px;background:#cdcdcd;"></div><svg class="a" style="left:928px;top:543px;" width="4" height="6" viewBox="0 0 4 6"><path d="M0.5 0.5L3 3L0.5 5.5" fill="none" stroke="#444" stroke-width="1"/></svg><svg class="a" style="left:937px;top:543px;" width="6" height="6" viewBox="0 0 6 6"><path d="M5.5 0.5V5.5H0.5Z" fill="#e0e0e0"/></svg><div class="a" style="left:120px;top:541px;width:213px;height:10px;background:#f0f0f0;"></div><div class="t" style="left:133.5px;top:541.1px;color:#222;">1 : 200</div><svg class="a" style="left:164.5px;top:541.5px;" width="9" height="8" viewBox="0 0 9 8"><rect x="0.5" y="1" width="8" height="6" fill="#fff" stroke="#555" stroke-width="0.8"/><path d="M0.5 3H8.5M2.5 1V3M4.5 1V3M6.5 1V3" stroke="#555" stroke-width="0.6"/></svg><svg class="a" style="left:175.5px;top:541.5px;" width="9" height="8" viewBox="0 0 9 8"><path d="M1 2.5L3 0.8H8V5.5L6 7.2H1Z" fill="#bfe0f8" stroke="#2f7fc8" stroke-width="0.8"/><path d="M1 2.5H6V7.2M6 2.5L8 0.8" fill="none" stroke="#2f7fc8" stroke-width="0.7"/></svg><svg class="a" style="left:186px;top:541.5px;" width="9" height="8" viewBox="0 0 9 8"><circle cx="3.5" cy="3.5" r="2.3" fill="#f6c030"/><path d="M3.5 0V1M0 3.5H1M1.2 1.2L1.8 1.8" stroke="#e0a020" stroke-width="0.7"/><path d="M5 4.5L8.5 8M8.5 4.5L5 8" stroke="#d22" stroke-width="1"/></svg><svg class="a" style="left:198px;top:541.5px;" width="9" height="8" viewBox="0 0 9 8"><circle cx="3" cy="3" r="2" fill="none" stroke="#2f7fc8" stroke-width="0.9"/><path d="M0.5 7.5Q3 4.5 5 6" fill="none" stroke="#2f7fc8" stroke-width="0.9"/><path d="M5 4.5L8.5 8M8.5 4.5L5 8" stroke="#d22" stroke-width="1"/></svg><svg class="a" style="left:209px;top:541.5px;" width="9" height="8" viewBox="0 0 9 8"><path d="M0.5 3Q3 0 6 2L8.5 1.5L7.5 4Q5 7 2 5Z" fill="none" stroke="#2f7fc8" stroke-width="0.8"/></svg><svg class="a" style="left:220.5px;top:541.5px;" width="9" height="8" viewBox="0 0 9 8"><path d="M0.5 4L4 1L8 4L4 7Z" fill="none" stroke="#2f7fc8" stroke-width="0.8"/><path d="M4 3L8 7M8 3L4 7" stroke="#d22" stroke-width="1"/></svg><svg class="a" style="left:231.5px;top:541.5px;" width="9" height="8" viewBox="0 0 9 8"><path d="M0.5 4L4 1L8 4L4 7Z" fill="none" stroke="#2f7fc8" stroke-width="0.8"/><circle cx="6" cy="5.5" r="1.8" fill="#fff" stroke="#2f7fc8" stroke-width="0.7"/></svg><svg class="a" style="left:242.5px;top:541.5px;" width="9" height="8" viewBox="0 0 9 8"><circle cx="4" cy="4" r="3.3" fill="#fff" stroke="#444" stroke-width="0.8"/><rect x="2.5" y="3" width="3" height="3" fill="#4aa86a"/><path d="M1 4H7" stroke="#444" stroke-width="0.6"/></svg><svg class="a" style="left:254px;top:541.5px;" width="9" height="8" viewBox="0 0 9 8"><path d="M0.5 5Q2 1 4 4Q6 7 8 2.5" fill="none" stroke="#555" stroke-width="0.9"/><circle cx="6.5" cy="5.5" r="1.5" fill="none" stroke="#2f7fc8" stroke-width="0.7"/></svg><svg class="a" style="left:266px;top:541.5px;" width="9" height="8" viewBox="0 0 9 8"><path d="M3 7.5L1.2 3.5A2 2 0 1 1 4.8 3.5Z" fill="#4a9ae0"/><circle cx="3" cy="2.6" r="0.8" fill="#fff"/></svg><svg class="a" style="left:276px;top:541.5px;" width="9" height="8" viewBox="0 0 9 8"><rect x="0.5" y="1" width="6" height="5.5" fill="#fff" stroke="#444" stroke-width="0.8"/><path d="M6.5 4L8.5 2.5V6.5Z" fill="#444"/><circle cx="6" cy="6" r="1.5" fill="#fff" stroke="#444" stroke-width="0.6"/></svg><svg class="a" style="left:287px;top:541.5px;" width="9" height="8" viewBox="0 0 9 8"><rect x="0.5" y="2" width="8" height="6" fill="#f4c060" stroke="#a05020" stroke-width="0.7"/><path d="M0.5 2L4.5 0L8.5 2" fill="#d44" stroke="#a05020" stroke-width="0.7"/><rect x="3" y="4" width="3" height="3" fill="#d44"/></svg><svg class="a" style="left:298.5px;top:541.5px;" width="9" height="8" viewBox="0 0 9 8"><circle cx="4" cy="4.5" r="3.3" fill="#ddd" stroke="#555" stroke-width="0.8"/><rect x="2" y="2.5" width="4" height="4" fill="#fff" stroke="#555" stroke-width="0.6"/></svg><svg class="a" style="left:309.5px;top:541.5px;" width="9" height="8" viewBox="0 0 9 8"><rect x="0.5" y="1" width="8" height="6.5" fill="#fff" stroke="#444" stroke-width="0.8"/><path d="M0.5 1L8.5 7.5" stroke="#444" stroke-width="0.6"/><rect x="0" y="0" width="2" height="2" fill="#444"/><rect x="7" y="0" width="2" height="2" fill="#444"/></svg><svg class="a" style="left:324px;top:543px;" width="4" height="5" viewBox="0 0 4 5"><path d="M3.5 0.5L1 2.5L3.5 4.5" fill="none" stroke="#333" stroke-width="0.9"/></svg><div class="t" style="left:1px;top:553.7px;color:#1e1e1e;">Cliquez pour sélectionner. Appuyez sur TAB pour afficher d'autres options, sur CTRL pour ajouter et sur MAJ pour désactiver.</div><svg class="a" style="left:606px;top:552.5px;" width="9" height="9" viewBox="0 0 9 9"><rect x="0.5" y="0.5" width="8" height="8" fill="#fff" stroke="#444" stroke-width="0.9"/><path d="M0.5 3H8.5M3 3V8.5" stroke="#444" stroke-width="0.8"/></svg><svg class="a" style="left:618.5px;top:552.5px;" width="9" height="9" viewBox="0 0 9 9"><path d="M1 8.5V1.5L4 0.5V7.5Z" fill="#bbb" stroke="#888" stroke-width="0.6"/><path d="M4 2H8V8.5H1" fill="none" stroke="#888" stroke-width="0.7"/></svg><div class="a" style="left:631.8px;top:552.5px;width:111.6px;height:10.5px;background:#fff;border:1px solid #d8d8d8"></div><div class="t" style="left:634px;top:553.1px;color:#8a8a8a;">Modèle de base</div><svg class="a" style="left:736px;top:556px;" width="5" height="3" viewBox="0 0 5 3"><path d="M0.3 0.3L2.5 2.5L4.7 0.3" fill="none" stroke="#777" stroke-width="0.8"/></svg><svg class="a" style="left:904px;top:552px;" width="10" height="10" viewBox="0 0 10 10"><path d="M1 4L3.5 1.5L6 4" fill="none" stroke="#e6b030" stroke-width="1.5"/><path d="M5.5 1L9 4.5M9 1L5.5 4.5" stroke="#d22" stroke-width="1.1"/><path d="M3.5 5V10" stroke="#333" stroke-width="1"/><path d="M2.5 6L5.5 9" stroke="#fff" stroke-width="1"/></svg><svg class="a" style="left:918.5px;top:552px;" width="10" height="10" viewBox="0 0 10 10"><path d="M1 7L4 2H9L6 7Z" fill="#bfe0f8" stroke="#2f7fc8" stroke-width="0.9"/><path d="M6 5V10M4.5 8L7.5 8" stroke="#333" stroke-width="0.9"/></svg><svg class="a" style="left:932.5px;top:552px;" width="11" height="10" viewBox="0 0 11 10"><rect x="1" y="1" width="3.5" height="3.5" fill="#f2a040" stroke="#a05020" stroke-width="0.6"/><rect x="1" y="5.5" width="3.5" height="3.5" fill="#f2a040" stroke="#a05020" stroke-width="0.6"/><path d="M6 4V10L7.5 8.5L9 10.5L10 10L8.5 8H10.5Z" fill="#fff" stroke="#333" stroke-width="0.6"/></svg><svg class="a" style="left:0;top:0" width="945" height="563" viewBox="0 0 945 563"><defs><clipPath id="cpN"><polygon points="460.80,386.80 460.80,382.06 460.66,377.28 460.39,372.47 459.99,367.64 459.46,362.79 458.79,357.95 458.00,353.10 457.08,348.26 456.03,343.44 454.85,338.64 453.56,333.87 452.14,329.14 450.60,324.46 448.94,319.83 447.17,315.26 445.29,310.76 443.30,306.33 441.20,301.99 439.00,297.73 436.70,293.56 434.30,289.50 431.82,285.54 429.24,281.70 426.58,277.97 423.84,274.37 421.03,270.91 418.14,267.57 415.19,264.38 412.17,261.33 409.10,258.43 405.97,255.69 402.79,253.11 399.57,250.69 396.32,248.44 393.03,246.35 389.71,244.45 386.36,242.71 383.00,241.16 379.63,239.79 376.25,238.60 372.87,237.60 369.49,236.78 366.11,236.15 362.75,235.72 359.41,235.47 356.09,235.41 352.81,235.54 349.55,235.87 346.33,236.38 343.16,237.08 340.04,237.97 336.96,239.05 333.95,240.31 331.00,241.75 328.12,243.37 325.31,245.18 322.57,247.15 319.92,249.30 317.35,251.62 314.86,254.11 312.47,256.75 310.18,259.56 307.99,262.51 305.89,265.62 303.91,268.87 302.03,272.25 300.27,275.78 298.62,279.43 297.08,283.20 295.67,287.09 294.38,291.09 293.21,295.19 292.17,299.39 291.25,303.69 290.47,308.07 289.81,312.52 289.29,317.05 288.89,321.65 288.63,326.30 288.50,331.00"/></clipPath><clipPath id="cpR"><polygon points="460.80,386.80 460.80,382.01 460.66,377.17 460.38,372.31 459.97,367.43 459.43,362.54 458.75,357.64 457.94,352.74 456.99,347.85 455.92,342.98 454.72,338.14 453.40,333.32 451.95,328.55 450.38,323.82 448.69,319.15 446.88,314.55 444.96,310.01 442.93,305.55 440.79,301.17 438.55,296.89 436.20,292.70 433.76,288.61 431.23,284.64 428.60,280.78 425.90,277.05 423.11,273.45 420.24,269.98 417.31,266.65 414.30,263.46 411.24,260.43 408.11,257.55 404.94,254.83 401.71,252.27 398.45,249.89 395.14,247.67 391.80,245.63 388.44,243.77 385.06,242.09 381.65,240.59 378.24,239.28 374.82,238.15 371.40,237.22 367.99,236.48 364.59,235.93 361.20,235.58 357.83,235.42 354.50,235.45 351.19,235.68 347.92,236.10 344.69,236.72 341.51,237.53 527.01,184.03 530.19,183.22 533.42,182.60 536.69,182.18 540.00,181.95 543.33,181.92 546.70,182.08 550.09,182.43 553.49,182.98 556.90,183.72 560.32,184.65 563.74,185.78 567.15,187.09 570.56,188.59 573.94,190.27 577.30,192.13 580.64,194.17 583.95,196.39 587.21,198.77 590.44,201.33 593.61,204.05 596.74,206.93 599.80,209.96 602.81,213.15 605.74,216.48 608.61,219.95 611.40,223.55 614.10,227.28 616.73,231.14 619.26,235.11 621.70,239.20 624.05,243.39 626.29,247.67 628.43,252.05 630.46,256.51 632.38,261.05 634.19,265.65 635.88,270.32 637.45,275.05 638.90,279.82 640.22,284.64 641.42,289.48 642.49,294.35 643.44,299.24 644.25,304.14 644.93,309.04 645.47,313.93 645.88,318.81 646.16,323.67 646.30,328.51 646.30,333.30"/></clipPath></defs><polygon points="460.80,386.80 460.80,382.01 460.66,377.17 460.38,372.31 459.97,367.43 459.43,362.54 458.75,357.64 457.94,352.74 456.99,347.85 455.92,342.98 454.72,338.14 453.40,333.32 451.95,328.55 450.38,323.82 448.69,319.15 446.88,314.55 444.96,310.01 442.93,305.55 440.79,301.17 438.55,296.89 436.20,292.70 433.76,288.61 431.23,284.64 428.60,280.78 425.90,277.05 423.11,273.45 420.24,269.98 417.31,266.65 414.30,263.46 411.24,260.43 408.11,257.55 404.94,254.83 401.71,252.27 398.45,249.89 395.14,247.67 391.80,245.63 388.44,243.77 385.06,242.09 381.65,240.59 378.24,239.28 374.82,238.15 371.40,237.22 367.99,236.48 364.59,235.93 361.20,235.58 357.83,235.42 354.50,235.45 351.19,235.68 347.92,236.10 344.69,236.72 341.51,237.53 527.01,184.03 530.19,183.22 533.42,182.60 536.69,182.18 540.00,181.95 543.33,181.92 546.70,182.08 550.09,182.43 553.49,182.98 556.90,183.72 560.32,184.65 563.74,185.78 567.15,187.09 570.56,188.59 573.94,190.27 577.30,192.13 580.64,194.17 583.95,196.39 587.21,198.77 590.44,201.33 593.61,204.05 596.74,206.93 599.80,209.96 602.81,213.15 605.74,216.48 608.61,219.95 611.40,223.55 614.10,227.28 616.73,231.14 619.26,235.11 621.70,239.20 624.05,243.39 626.29,247.67 628.43,252.05 630.46,256.51 632.38,261.05 634.19,265.65 635.88,270.32 637.45,275.05 638.90,279.82 640.22,284.64 641.42,289.48 642.49,294.35 643.44,299.24 644.25,304.14 644.93,309.04 645.47,313.93 645.88,318.81 646.16,323.67 646.30,328.51 646.30,333.30" fill="#c6c6e2" /><g clip-path="url(#cpR)"><polygon points="288.50,331.00 460.80,386.80 646.30,333.30 474.00,277.50" fill="#e0e0f8" /><polyline points="508.46,288.66 509.74,192.42" fill="none" stroke="#8e8eae" stroke-width="0.8" stroke-linejoin="round" stroke-linecap="round" /><polyline points="542.92,299.82 544.49,181.95" fill="none" stroke="#8e8eae" stroke-width="0.8" stroke-linejoin="round" stroke-linecap="round" /><polyline points="577.38,310.98 578.95,193.11" fill="none" stroke="#8e8eae" stroke-width="0.8" stroke-linejoin="round" stroke-linecap="round" /><polyline points="611.84,322.14 613.12,225.90" fill="none" stroke="#8e8eae" stroke-width="0.8" stroke-linejoin="round" stroke-linecap="round" /><polyline points="475.98,254.48 644.95,309.20" fill="none" stroke="#8e8eae" stroke-width="0.8" stroke-linejoin="round" stroke-linecap="round" /><polyline points="481.83,231.71 639.75,282.85" fill="none" stroke="#8e8eae" stroke-width="0.8" stroke-linejoin="round" stroke-linecap="round" /><polyline points="492.47,210.49 629.77,254.95" fill="none" stroke="#8e8eae" stroke-width="0.8" stroke-linejoin="round" stroke-linecap="round" /><polyline points="510.72,191.73 612.16,224.58" fill="none" stroke="#8e8eae" stroke-width="0.8" stroke-linejoin="round" stroke-linecap="round" /><polyline points="527.01,184.03 523.96,184.99 520.97,186.14 518.04,187.47 515.17,188.97 512.37,190.64 509.64,192.49 506.99,194.50 504.41,196.68 501.92,199.02 499.51,201.52 497.20,204.17 494.97,206.98 492.85,209.93 490.82,213.02 488.90,216.25 487.09,219.61 485.38,223.10 483.78,226.71 482.30,230.44 480.93,234.28 479.69,238.23 478.56,242.28 477.55,246.42 476.66,250.65 475.90,254.96 475.27,259.34 474.76,263.79 474.38,268.31 474.13,272.88 474.00,277.50" fill="none" stroke="#8e8eae" stroke-width="0.9" stroke-linejoin="round" stroke-linecap="round" /><polyline points="305.89,265.62 491.39,212.12" fill="none" stroke="#a4a4c0" stroke-width="0.8" stroke-linejoin="round" stroke-linecap="round" /><polyline points="349.55,235.87 535.05,182.37" fill="none" stroke="#a4a4c0" stroke-width="0.8" stroke-linejoin="round" stroke-linecap="round" /><polyline points="378.61,226.83 375.56,227.79 372.57,228.94 369.64,230.27 366.77,231.77 363.97,233.44 361.24,235.29 358.59,237.30 356.01,239.48 353.52,241.82 351.11,244.32 348.80,246.97 346.57,249.78 344.45,252.73 342.42,255.82 340.50,259.05 338.69,262.41 336.98,265.90 335.38,269.51 333.90,273.24 332.53,277.08 331.29,281.03 330.16,285.08 329.15,289.22 328.26,293.45 327.50,297.76 326.87,302.14 326.36,306.59 325.98,311.11 325.73,315.68 325.60,320.30" fill="none" stroke="#a4a4c2" stroke-width="2.4" stroke-linejoin="round" stroke-linecap="round" /><polyline points="415.71,216.13 412.66,217.09 409.67,218.24 406.74,219.57 403.87,221.07 401.07,222.74 398.34,224.59 395.69,226.60 393.11,228.78 390.62,231.12 388.21,233.62 385.90,236.27 383.67,239.08 381.55,242.03 379.52,245.12 377.60,248.35 375.79,251.71 374.08,255.20 372.48,258.81 371.00,262.54 369.63,266.38 368.39,270.33 367.26,274.38 366.25,278.52 365.36,282.75 364.60,287.06 363.97,291.44 363.46,295.89 363.08,300.41 362.83,304.98 362.70,309.60" fill="none" stroke="#a4a4c2" stroke-width="2.4" stroke-linejoin="round" stroke-linecap="round" /><polyline points="452.81,205.43 449.76,206.39 446.77,207.54 443.84,208.87 440.97,210.37 438.17,212.04 435.44,213.89 432.79,215.90 430.21,218.08 427.72,220.42 425.31,222.92 423.00,225.57 420.77,228.38 418.65,231.33 416.62,234.42 414.70,237.65 412.89,241.01 411.18,244.50 409.58,248.11 408.10,251.84 406.73,255.68 405.49,259.63 404.36,263.68 403.35,267.82 402.46,272.05 401.70,276.36 401.07,280.74 400.56,285.19 400.18,289.71 399.93,294.28 399.80,298.90" fill="none" stroke="#a4a4c2" stroke-width="2.4" stroke-linejoin="round" stroke-linecap="round" /><polyline points="489.91,194.73 486.86,195.69 483.87,196.84 480.94,198.17 478.07,199.67 475.27,201.34 472.54,203.19 469.89,205.20 467.31,207.38 464.82,209.72 462.41,212.22 460.10,214.87 457.87,217.68 455.75,220.63 453.72,223.72 451.80,226.95 449.99,230.31 448.28,233.80 446.68,237.41 445.20,241.14 443.83,244.98 442.59,248.93 441.46,252.98 440.45,257.12 439.56,261.35 438.80,265.66 438.17,270.04 437.66,274.49 437.28,279.01 437.03,283.58 436.90,288.20" fill="none" stroke="#a4a4c2" stroke-width="2.4" stroke-linejoin="round" stroke-linecap="round" /></g><polygon points="460.80,386.80 460.80,382.06 460.66,377.28 460.39,372.47 459.99,367.64 459.46,362.79 458.79,357.95 458.00,353.10 457.08,348.26 456.03,343.44 454.85,338.64 453.56,333.87 452.14,329.14 450.60,324.46 448.94,319.83 447.17,315.26 445.29,310.76 443.30,306.33 441.20,301.99 439.00,297.73 436.70,293.56 434.30,289.50 431.82,285.54 429.24,281.70 426.58,277.97 423.84,274.37 421.03,270.91 418.14,267.57 415.19,264.38 412.17,261.33 409.10,258.43 405.97,255.69 402.79,253.11 399.57,250.69 396.32,248.44 393.03,246.35 389.71,244.45 386.36,242.71 383.00,241.16 379.63,239.79 376.25,238.60 372.87,237.60 369.49,236.78 366.11,236.15 362.75,235.72 359.41,235.47 356.09,235.41 352.81,235.54 349.55,235.87 346.33,236.38 343.16,237.08 340.04,237.97 336.96,239.05 333.95,240.31 331.00,241.75 328.12,243.37 325.31,245.18 322.57,247.15 319.92,249.30 317.35,251.62 314.86,254.11 312.47,256.75 310.18,259.56 307.99,262.51 305.89,265.62 303.91,268.87 302.03,272.25 300.27,275.78 298.62,279.43 297.08,283.20 295.67,287.09 294.38,291.09 293.21,295.19 292.17,299.39 291.25,303.69 290.47,308.07 289.81,312.52 289.29,317.05 288.89,321.65 288.63,326.30 288.50,331.00" fill="#74778f" /><g clip-path="url(#cpN)"><polygon points="288.50,331.00 460.80,386.80 646.30,333.30 474.00,277.50" fill="#7f7f87" /><polygon points="344.25,236.82 341.84,237.43 339.47,238.15 337.12,238.99 334.81,239.92 332.54,240.97 330.30,242.12 328.11,243.38 325.95,244.74 323.84,246.21 321.78,247.77 319.76,249.44 317.79,251.20 315.88,253.06 314.01,255.02 312.20,257.07 310.45,259.21 308.76,261.44 307.12,263.76 305.55,266.16 304.03,268.65 331.86,260.63 372.07,228.79" fill="#5e6073" /><polyline points="325.60,320.30 343.69,253.85" fill="none" stroke="#45475a" stroke-width="3.0" stroke-linejoin="round" stroke-linecap="round" /><polyline points="343.69,253.85 346.98,249.24 350.50,244.99 354.25,241.11 358.20,237.62 362.34,234.52 366.67,231.83 371.15,229.56 375.78,227.72 380.54,226.31 385.41,225.34" fill="none" stroke="#5a5c70" stroke-width="2.4000000000000004" stroke-linejoin="round" stroke-linecap="round" /><polyline points="362.70,309.60 380.79,243.15" fill="none" stroke="#45475a" stroke-width="3.0" stroke-linejoin="round" stroke-linecap="round" /><polyline points="380.79,243.15 384.08,238.54 387.60,234.29 391.35,230.41 395.30,226.92 399.44,223.82 403.77,221.13 408.25,218.86 412.88,217.02 417.64,215.61 422.51,214.64" fill="none" stroke="#5a5c70" stroke-width="2.4000000000000004" stroke-linejoin="round" stroke-linecap="round" /><polyline points="399.80,298.90 417.89,232.45" fill="none" stroke="#45475a" stroke-width="2.8" stroke-linejoin="round" stroke-linecap="round" /><polyline points="417.89,232.45 421.18,227.84 424.70,223.59 428.45,219.71 432.40,216.22 436.54,213.12 440.87,210.43 445.35,208.16 449.98,206.32 454.74,204.91 459.61,203.94" fill="none" stroke="#5a5c70" stroke-width="2.2399999999999998" stroke-linejoin="round" stroke-linecap="round" /><polyline points="436.90,288.20 454.99,221.75" fill="none" stroke="#45475a" stroke-width="2.4" stroke-linejoin="round" stroke-linecap="round" /><polyline points="454.99,221.75 458.28,217.14 461.80,212.89 465.55,209.01 469.50,205.52 473.64,202.42 477.97,199.73 482.45,197.46 487.08,195.62 491.84,194.21 496.71,193.24" fill="none" stroke="#5a5c70" stroke-width="1.92" stroke-linejoin="round" stroke-linecap="round" /><polyline points="305.89,265.62 491.39,212.12" fill="none" stroke="#3a3c4c" stroke-width="0.9" stroke-linejoin="round" stroke-linecap="round" /><polyline points="349.55,235.87 535.05,182.37" fill="none" stroke="#3a3c4c" stroke-width="0.9" stroke-linejoin="round" stroke-linecap="round" /><polyline points="322.96,344.16 322.96,150.00" fill="none" stroke="#22222e" stroke-width="1.0" stroke-linejoin="round" stroke-linecap="round" /><polyline points="357.42,355.32 357.42,150.00" fill="none" stroke="#22222e" stroke-width="1.0" stroke-linejoin="round" stroke-linecap="round" /><polyline points="391.88,366.48 391.88,150.00" fill="none" stroke="#22222e" stroke-width="1.0" stroke-linejoin="round" stroke-linecap="round" /><polyline points="426.34,377.64 426.34,150.00" fill="none" stroke="#22222e" stroke-width="1.0" stroke-linejoin="round" stroke-linecap="round" /><polyline points="283.50,305.88 465.80,364.92" fill="none" stroke="#22222e" stroke-width="1.0" stroke-linejoin="round" stroke-linecap="round" /><polyline points="283.50,281.38 465.80,340.42" fill="none" stroke="#22222e" stroke-width="1.0" stroke-linejoin="round" stroke-linecap="round" /><polyline points="283.50,256.88 465.80,315.92" fill="none" stroke="#22222e" stroke-width="1.0" stroke-linejoin="round" stroke-linecap="round" /><polyline points="283.50,232.38 465.80,291.42" fill="none" stroke="#22222e" stroke-width="1.0" stroke-linejoin="round" stroke-linecap="round" /></g><polyline points="497.90,376.10 497.88,370.10 497.66,364.04 497.23,357.94 496.61,351.81 495.79,345.68 494.77,339.54 493.56,333.42 492.16,327.34 490.57,321.30 488.80,315.33 486.85,309.43 484.73,303.63 482.44,297.93 479.99,292.35 477.39,286.91 474.64,281.61 471.74,276.48 468.72,271.51 465.56,266.73 462.29,262.15 458.92,257.77 455.44,253.61 451.87,249.68 448.22,245.98 444.50,242.54 440.71,239.34 436.87,236.41 432.99,233.75 429.08,231.36 425.15,229.26 421.21,227.44 417.27,225.91 413.33,224.68 409.42,223.74 405.54,223.11 401.70,222.77 397.91,222.73 394.18,222.99 390.53,223.56 386.95,224.42" fill="none" stroke="#50505a" stroke-width="3.3" stroke-linejoin="round" stroke-linecap="round" /><polyline points="498.40,375.90 498.38,369.90 498.16,363.84 497.73,357.74 497.11,351.61 496.29,345.48 495.27,339.34 494.06,333.22 492.66,327.14 491.07,321.10 489.30,315.13 487.35,309.23 485.23,303.43 482.94,297.73 480.49,292.15 477.89,286.71 475.14,281.41 472.24,276.28 469.22,271.31 466.06,266.53 462.79,261.95 459.42,257.57 455.94,253.41 452.37,249.48 448.72,245.78 445.00,242.34 441.21,239.14 437.37,236.21 433.49,233.55 429.58,231.16 425.65,229.06 421.71,227.24 417.77,225.71 413.83,224.48 409.92,223.54 406.04,222.91 402.20,222.57 398.41,222.53 394.68,222.79 391.03,223.36 387.45,224.22" fill="none" stroke="#d6d6da" stroke-width="2.0" stroke-linejoin="round" stroke-linecap="round" /><polyline points="535.00,365.40 534.98,359.40 534.76,353.34 534.33,347.24 533.71,341.11 532.89,334.98 531.87,328.84 530.66,322.72 529.26,316.64 527.67,310.60 525.90,304.63 523.95,298.73 521.83,292.93 519.54,287.23 517.09,281.65 514.49,276.21 511.74,270.91 508.84,265.78 505.82,260.81 502.66,256.03 499.39,251.45 496.02,247.07 492.54,242.91 488.97,238.98 485.32,235.28 481.60,231.84 477.81,228.64 473.97,225.71 470.09,223.05 466.18,220.66 462.25,218.56 458.31,216.74 454.37,215.21 450.43,213.98 446.52,213.04 442.64,212.41 438.80,212.07 435.01,212.03 431.28,212.29 427.63,212.86 424.05,213.72" fill="none" stroke="#50505a" stroke-width="3.3" stroke-linejoin="round" stroke-linecap="round" /><polyline points="535.50,365.20 535.48,359.20 535.26,353.14 534.83,347.04 534.21,340.91 533.39,334.78 532.37,328.64 531.16,322.52 529.76,316.44 528.17,310.40 526.40,304.43 524.45,298.53 522.33,292.73 520.04,287.03 517.59,281.45 514.99,276.01 512.24,270.71 509.34,265.58 506.32,260.61 503.16,255.83 499.89,251.25 496.52,246.87 493.04,242.71 489.47,238.78 485.82,235.08 482.10,231.64 478.31,228.44 474.47,225.51 470.59,222.85 466.68,220.46 462.75,218.36 458.81,216.54 454.87,215.01 450.93,213.78 447.02,212.84 443.14,212.21 439.30,211.87 435.51,211.83 431.78,212.09 428.13,212.66 424.55,213.52" fill="none" stroke="#d6d6da" stroke-width="2.0" stroke-linejoin="round" stroke-linecap="round" /><polyline points="572.10,354.70 572.08,348.70 571.86,342.64 571.43,336.54 570.81,330.41 569.99,324.28 568.97,318.14 567.76,312.02 566.36,305.94 564.77,299.90 563.00,293.93 561.05,288.03 558.93,282.23 556.64,276.53 554.19,270.95 551.59,265.51 548.84,260.21 545.94,255.08 542.92,250.11 539.76,245.33 536.49,240.75 533.12,236.37 529.64,232.21 526.07,228.28 522.42,224.58 518.70,221.14 514.91,217.94 511.07,215.01 507.19,212.35 503.28,209.96 499.35,207.86 495.41,206.04 491.47,204.51 487.53,203.28 483.62,202.34 479.74,201.71 475.90,201.37 472.11,201.33 468.38,201.59 464.73,202.16 461.15,203.02" fill="none" stroke="#50505a" stroke-width="3.3" stroke-linejoin="round" stroke-linecap="round" /><polyline points="572.60,354.50 572.58,348.50 572.36,342.44 571.93,336.34 571.31,330.21 570.49,324.08 569.47,317.94 568.26,311.82 566.86,305.74 565.27,299.70 563.50,293.73 561.55,287.83 559.43,282.03 557.14,276.33 554.69,270.75 552.09,265.31 549.34,260.01 546.44,254.88 543.42,249.91 540.26,245.13 536.99,240.55 533.62,236.17 530.14,232.01 526.57,228.08 522.92,224.38 519.20,220.94 515.41,217.74 511.57,214.81 507.69,212.15 503.78,209.76 499.85,207.66 495.91,205.84 491.97,204.31 488.03,203.08 484.12,202.14 480.24,201.51 476.40,201.17 472.61,201.13 468.88,201.39 465.23,201.96 461.65,202.82" fill="none" stroke="#d6d6da" stroke-width="2.0" stroke-linejoin="round" stroke-linecap="round" /><polyline points="609.20,344.00 609.18,338.00 608.96,331.94 608.53,325.84 607.91,319.71 607.09,313.58 606.07,307.44 604.86,301.32 603.46,295.24 601.87,289.20 600.10,283.23 598.15,277.33 596.03,271.53 593.74,265.83 591.29,260.25 588.69,254.81 585.94,249.51 583.04,244.38 580.02,239.41 576.86,234.63 573.59,230.05 570.22,225.67 566.74,221.51 563.17,217.58 559.52,213.88 555.80,210.44 552.01,207.24 548.17,204.31 544.29,201.65 540.38,199.26 536.45,197.16 532.51,195.34 528.57,193.81 524.63,192.58 520.72,191.64 516.84,191.01 513.00,190.67 509.21,190.63 505.48,190.89 501.83,191.46 498.25,192.32" fill="none" stroke="#50505a" stroke-width="3.3" stroke-linejoin="round" stroke-linecap="round" /><polyline points="609.70,343.80 609.68,337.80 609.46,331.74 609.03,325.64 608.41,319.51 607.59,313.38 606.57,307.24 605.36,301.12 603.96,295.04 602.37,289.00 600.60,283.03 598.65,277.13 596.53,271.33 594.24,265.63 591.79,260.05 589.19,254.61 586.44,249.31 583.54,244.18 580.52,239.21 577.36,234.43 574.09,229.85 570.72,225.47 567.24,221.31 563.67,217.38 560.02,213.68 556.30,210.24 552.51,207.04 548.67,204.11 544.79,201.45 540.88,199.06 536.95,196.96 533.01,195.14 529.07,193.61 525.13,192.38 521.22,191.44 517.34,190.81 513.50,190.47 509.71,190.43 505.98,190.69 502.33,191.26 498.75,192.12" fill="none" stroke="#d6d6da" stroke-width="2.0" stroke-linejoin="round" stroke-linecap="round" /><polyline points="349.55,235.87 535.05,182.37" fill="none" stroke="#55555f" stroke-width="2.2" stroke-linejoin="round" stroke-linecap="round" /><polyline points="349.55,235.87 535.05,182.37" fill="none" stroke="#d8d8dc" stroke-width="1.2" stroke-linejoin="round" stroke-linecap="round" /><polyline points="445.29,310.76 630.79,257.26" fill="none" stroke="#22222e" stroke-width="1.1" stroke-linejoin="round" stroke-linecap="round" /><polyline points="402.79,253.11 588.29,199.61" fill="none" stroke="#22222e" stroke-width="1.1" stroke-linejoin="round" stroke-linecap="round" /><polyline points="462.00,386.50 461.97,380.50 461.73,374.45 461.29,368.36 460.63,362.24 459.76,356.11 458.68,349.99 457.40,343.90 455.92,337.84 454.25,331.82 452.38,325.88 450.32,320.02 448.08,314.25 445.66,308.59 443.07,303.05 440.32,297.65 437.40,292.40 434.34,287.31 431.13,282.40 427.78,277.67 424.31,273.15 420.72,268.83 417.01,264.74 413.21,260.87 409.31,257.25 405.33,253.88 401.28,250.76 397.17,247.91 393.00,245.33 388.80,243.03 384.56,241.01 380.30,239.29 376.02,237.85 371.75,236.72 367.49,235.88 363.25,235.35 359.03,235.12 354.87,235.19 350.75,235.57 346.69,236.25 342.71,237.23" fill="none" stroke="#55555f" stroke-width="2.6" stroke-linejoin="round" stroke-linecap="round" /><polyline points="462.30,386.40 462.27,380.40 462.03,374.35 461.59,368.26 460.93,362.14 460.06,356.01 458.98,349.89 457.70,343.80 456.22,337.74 454.55,331.72 452.68,325.78 450.62,319.92 448.38,314.15 445.96,308.49 443.37,302.95 440.62,297.55 437.70,292.30 434.64,287.21 431.43,282.30 428.08,277.57 424.61,273.05 421.02,268.73 417.31,264.64 413.51,260.77 409.61,257.15 405.63,253.78 401.58,250.66 397.47,247.81 393.30,245.23 389.10,242.93 384.86,240.91 380.60,239.19 376.32,237.75 372.05,236.62 367.79,235.78 363.55,235.25 359.33,235.02 355.17,235.09 351.05,235.47 346.99,236.15 343.01,237.13" fill="none" stroke="#d4d4d8" stroke-width="1.3" stroke-linejoin="round" stroke-linecap="round" /><polyline points="647.50,333.00 647.47,327.00 647.23,320.95 646.79,314.86 646.13,308.74 645.26,302.61 644.18,296.49 642.90,290.40 641.42,284.34 639.75,278.32 637.88,272.38 635.82,266.52 633.58,260.75 631.16,255.09 628.57,249.55 625.82,244.15 622.90,238.90 619.84,233.81 616.63,228.90 613.28,224.17 609.81,219.65 606.22,215.33 602.51,211.24 598.71,207.37 594.81,203.75 590.83,200.38 586.78,197.26 582.67,194.41 578.50,191.83 574.30,189.53 570.06,187.51 565.80,185.79 561.52,184.35 557.25,183.22 552.99,182.38 548.75,181.85 544.53,181.62 540.37,181.69 536.25,182.07 532.19,182.75 528.21,183.73" fill="none" stroke="#55555f" stroke-width="2.6" stroke-linejoin="round" stroke-linecap="round" /><polyline points="647.80,332.90 647.77,326.90 647.53,320.85 647.09,314.76 646.43,308.64 645.56,302.51 644.48,296.39 643.20,290.30 641.72,284.24 640.05,278.22 638.18,272.28 636.12,266.42 633.88,260.65 631.46,254.99 628.87,249.45 626.12,244.05 623.20,238.80 620.14,233.71 616.93,228.80 613.58,224.07 610.11,219.55 606.52,215.23 602.81,211.14 599.01,207.27 595.11,203.65 591.13,200.28 587.08,197.16 582.97,194.31 578.80,191.73 574.60,189.43 570.36,187.41 566.10,185.69 561.82,184.25 557.55,183.12 553.29,182.28 549.05,181.75 544.83,181.52 540.67,181.59 536.55,181.97 532.49,182.65 528.51,183.63" fill="none" stroke="#d4d4d8" stroke-width="1.3" stroke-linejoin="round" stroke-linecap="round" /><polyline points="460.80,386.80 460.80,382.06 460.66,377.28 460.39,372.47 459.99,367.64 459.46,362.79 458.79,357.95 458.00,353.10 457.08,348.26 456.03,343.44 454.85,338.64 453.56,333.87 452.14,329.14 450.60,324.46 448.94,319.83 447.17,315.26 445.29,310.76 443.30,306.33 441.20,301.99 439.00,297.73 436.70,293.56 434.30,289.50 431.82,285.54 429.24,281.70 426.58,277.97 423.84,274.37 421.03,270.91 418.14,267.57 415.19,264.38 412.17,261.33 409.10,258.43 405.97,255.69 402.79,253.11 399.57,250.69 396.32,248.44 393.03,246.35 389.71,244.45 386.36,242.71 383.00,241.16 379.63,239.79 376.25,238.60 372.87,237.60 369.49,236.78 366.11,236.15 362.75,235.72 359.41,235.47 356.09,235.41 352.81,235.54 349.55,235.87 346.33,236.38 343.16,237.08 340.04,237.97 336.96,239.05 333.95,240.31 331.00,241.75 328.12,243.37 325.31,245.18 322.57,247.15 319.92,249.30 317.35,251.62 314.86,254.11 312.47,256.75 310.18,259.56 307.99,262.51 305.89,265.62 303.91,268.87 302.03,272.25 300.27,275.78 298.62,279.43 297.08,283.20 295.67,287.09 294.38,291.09 293.21,295.19 292.17,299.39 291.25,303.69 290.47,308.07 289.81,312.52 289.29,317.05 288.89,321.65 288.63,326.30 288.50,331.00" fill="none" stroke="#22222e" stroke-width="1.1" stroke-linejoin="round" stroke-linecap="round" /><polyline points="288.50,331.00 460.80,386.80 646.30,333.30" fill="none" stroke="#22222e" stroke-width="1.1" stroke-linejoin="round" stroke-linecap="round" /><polyline points="646.30,333.30 646.27,327.30 646.03,321.25 645.59,315.16 644.93,309.04 644.06,302.91 642.98,296.79 641.70,290.70 640.22,284.64 638.55,278.62 636.68,272.68 634.62,266.82 632.38,261.05 629.96,255.39 627.37,249.85 624.62,244.45 621.70,239.20 618.64,234.11 615.43,229.20 612.08,224.47 608.61,219.95 605.02,215.63 601.31,211.54 597.51,207.67 593.61,204.05 589.63,200.68 585.58,197.56 581.47,194.71 577.30,192.13 573.10,189.83 568.86,187.81 564.60,186.09 560.32,184.65 556.05,183.52 551.79,182.68 547.55,182.15 543.33,181.92 539.17,181.99 535.05,182.37 530.99,183.05 527.01,184.03" fill="none" stroke="#3a3a46" stroke-width="1.1" stroke-linejoin="round" stroke-linecap="round" /><polyline points="341.51,237.53 527.01,184.03" fill="none" stroke="#3a3a46" stroke-width="1.1" stroke-linejoin="round" stroke-linecap="round" /></svg><svg class="a" style="left:0;top:0" width="945" height="563" viewBox="0 0 945 563"><defs><linearGradient id="cgl" x1="0" y1="0" x2="0" y2="1"><stop offset="0" stop-color="#f2f2f2"/><stop offset="1" stop-color="#dcdcdc"/></linearGradient><linearGradient id="cgr" x1="0" y1="0" x2="0" y2="1"><stop offset="0" stop-color="#ececec"/><stop offset="1" stop-color="#d4d4d4"/></linearGradient></defs><ellipse cx="884.8" cy="171.8" rx="35.8" ry="13.3" fill="none" stroke="#d6d6d6" stroke-width="1.2"/><ellipse cx="884.8" cy="171.5" rx="28" ry="7.8" fill="none" stroke="#dadada" stroke-width="1"/><ellipse cx="884.5" cy="170" rx="20" ry="6" fill="#e8e8e8" opacity="0.5"/><path d="M854.5 176.5Q858 174 862 177.5L860 180.5Q857 179 855 181Z" fill="#f4f4f4" stroke="#c4c4c4" stroke-width="0.7"/><path d="M906.5 177.5Q910 175 914 178L912 181Q909 180 907 182Z" fill="#f4f4f4" stroke="#c4c4c4" stroke-width="0.7"/><path d="M866.4 142.3L884.3 146.9V173.5L867.5 167.7Z" fill="url(#cgl)" stroke="#a0a0a0" stroke-width="0.8"/><path d="M884.3 146.9L903.3 142.3L902.7 167.1L884.3 173.5Z" fill="url(#cgr)" stroke="#a0a0a0" stroke-width="0.8"/><path d="M866.4 142.3L884.8 137.7L903.3 142.3L884.3 146.9Z" fill="#f2f2f2" stroke="#a8a8a8" stroke-width="0.8"/><text x="868" y="159.8" font-family="Liberation Sans" font-size="5.6" fill="#777" textLength="15.5" lengthAdjust="spacingAndGlyphs" transform="rotate(9 875.5 158)">GAUCHE</text><text x="886.8" y="160" font-family="Liberation Sans" font-size="5.6" fill="#777" textLength="14.5" lengthAdjust="spacingAndGlyphs" transform="rotate(-9 894 158)">AVANT</text><text x="884.8" y="143.8" font-family="Liberation Sans" font-size="3.5" fill="#b0b0b0" text-anchor="middle">HAUT</text><rect x="915" y="199" width="18" height="62.8" rx="3" fill="#f7f7f7" stroke="#a9a9a9" stroke-width="1"/><circle cx="930.8" cy="201.5" r="1.5" fill="#fff" stroke="#999" stroke-width="0.7"/><circle cx="930.8" cy="259.3" r="1.5" fill="#fff" stroke="#999" stroke-width="0.7"/><circle cx="923.9" cy="214.6" r="5" fill="#f0f0f0" stroke="#888" stroke-width="0.9"/><circle cx="923.9" cy="214.6" r="2.8" fill="#fafafa" stroke="#999" stroke-width="0.8"/><path d="M922.6 225.4H925.2L923.9 227Z" fill="#555"/><path d="M916.5 230.8H931.5" stroke="#cfcfcf" stroke-width="0.8"/><rect x="920" y="234.5" width="6" height="6" fill="#8fcf8f" stroke="#5a9f5a" stroke-width="0.6"/><circle cx="925.8" cy="240.5" r="1.8" fill="none" stroke="#444" stroke-width="0.7"/><path d="M927 241.8L928.6 243.4" stroke="#444" stroke-width="0.8"/><path d="M922.6 248.5H925.2L923.9 250.1Z" fill="#555"/></svg><div class="a" style="left:355.5px;top:59.5px;width:198px;height:68px;background:rgba(245,245,249,0.9);border:1px solid #c6c6c6;box-shadow:1px 1px 1px rgba(0,0,0,0.12)"></div><div class="t" style="left:360px;top:63.5px;color:#4a4a4a;font-weight:bold;">Quadrillage du mur-rideau</div><div class="t" style="left:360px;top:75.0px;color:#5a5a5a;">Crée une ligne de quadrillage sur un mur-rideau ou un système de</div><div class="t" style="left:360px;top:83.0px;color:#5a5a5a;">mur-rideau.</div><div class="a" style="left:356.5px;top:94.5px;width:196px;height:1px;background:#cfcfcf;"></div><div class="t" style="left:360px;top:107.5px;color:#555;font-weight:bold;">Appuyez sur F1 pour obtenir de l'aide</div><div class="a" style="left:479px;top:107px;width:1px;height:10px;background:#a8a8a8;"></div><svg class="a" style="left:483px;top:107px;" width="9" height="9" viewBox="0 0 9 9"><rect x="0.6" y="1.5" width="6.5" height="7" fill="#f4f4f4" stroke="#666" stroke-width="0.9"/><path d="M2 4H6M2 6H6" stroke="#666" stroke-width="0.7"/><circle cx="7.5" cy="1.8" r="1.5" fill="#f08a2a"/></svg><div class="t" style="left:494.3px;top:99.2px;color:#555;font-weight:bold;">La vidéo est en</div><div class="t" style="left:494.3px;top:107.5px;color:#555;font-weight:bold;">cours de</div><div class="t" style="left:494.3px;top:115.8px;color:#555;font-weight:bold;">chargement...</div><div class="a" style="left:311px;top:26px;width:78px;height:42px;background:transparent;border:3px solid #f50000"></div>
</body></html>
